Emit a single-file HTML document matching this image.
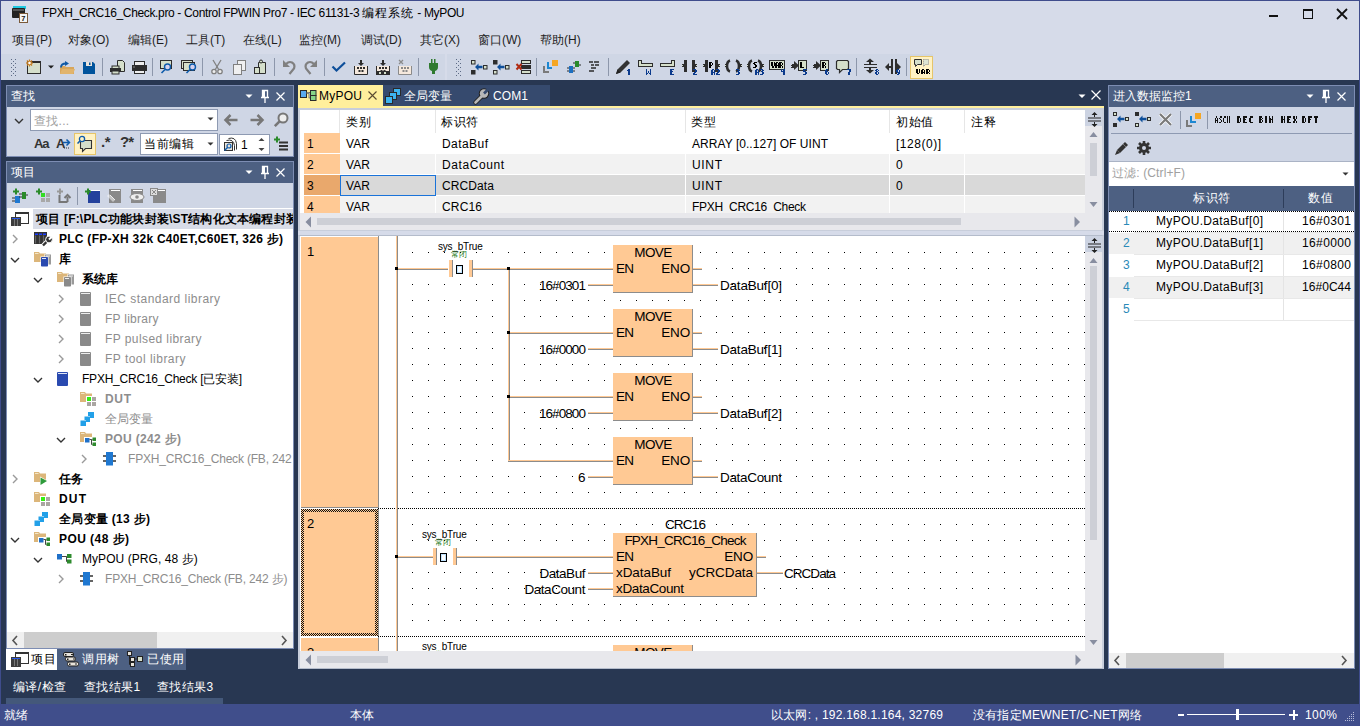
<!DOCTYPE html><html><head><meta charset="utf-8"><style>
*{box-sizing:border-box;margin:0;padding:0}
html,body{width:1360px;height:726px;overflow:hidden;background:#283752;font-family:"Liberation Sans",sans-serif;font-size:12px;color:#000}
.a{position:absolute}
.t{position:absolute;white-space:pre;line-height:14px}
svg{position:absolute;overflow:visible}
</style></head><body><div class="a" style="left:0;top:0;width:1360px;height:726px;background:#283752"></div><div class="a" style="left:0;top:0;width:1360px;height:80px;background:#d6dbe9"></div><div class="a" style="left:1px;top:54px;width:444px;height:26px;background:#cfd6e5"></div><div class="a" style="left:447px;top:54px;width:486px;height:26px;background:#cfd6e5"></div><svg style="left:11px;top:5px" width="18" height="18" viewBox="0 0 18 18"><rect x="2" y="1" width="13" height="3" fill="#1ec8e0"/><rect x="1" y="3" width="13" height="10" rx="1" fill="#222"/><rect x="2" y="4" width="11" height="2" fill="#555"/><rect x="8.5" y="8.5" width="8" height="9" fill="#f4f4f4" stroke="#7a5a3a"/><text x="10.3" y="16.3" font-size="7.5" font-weight="bold" font-family="Liberation Sans" fill="#111">7</text></svg><div class="t" style="left:42px;top:6px;font-size:12px;letter-spacing:-0.35px;color:#000">FPXH_CRC16_Check.pro - Control FPWIN Pro7 - IEC 61131-3 <span style="letter-spacing:1px">编程系统</span> - MyPOU</div><div class="a" style="left:1269px;top:15px;width:9px;height:2px;background:#111"></div><div class="a" style="left:1303px;top:9px;width:10px;height:10px;border:1px solid #111;border-top-width:2px"></div><svg style="left:1336px;top:8px" width="12" height="12" viewBox="0 0 12 12"><path d="M1 1L11 11M11 1L1 11" stroke="#111" stroke-width="1.8"/></svg><div class="t" style="left:12px;top:33px;color:#1e1e1e">项目(P)</div><div class="t" style="left:68px;top:33px;color:#1e1e1e">对象(O)</div><div class="t" style="left:128px;top:33px;color:#1e1e1e">编辑(E)</div><div class="t" style="left:186px;top:33px;color:#1e1e1e">工具(T)</div><div class="t" style="left:243px;top:33px;color:#1e1e1e">在线(L)</div><div class="t" style="left:299px;top:33px;color:#1e1e1e">监控(M)</div><div class="t" style="left:361px;top:33px;color:#1e1e1e">调试(D)</div><div class="t" style="left:420px;top:33px;color:#1e1e1e">其它(X)</div><div class="t" style="left:478px;top:33px;color:#1e1e1e">窗口(W)</div><div class="t" style="left:540px;top:33px;color:#1e1e1e">帮助(H)</div><svg class="a" style="left:0;top:54px" width="1358" height="26" viewBox="0 54 1358 26" ><rect x="11" y="59" width="1" height="1" fill="#5c6a85"/><rect x="15" y="59" width="1" height="1" fill="#5c6a85"/><rect x="11" y="63" width="1" height="1" fill="#5c6a85"/><rect x="15" y="63" width="1" height="1" fill="#5c6a85"/><rect x="11" y="67" width="1" height="1" fill="#5c6a85"/><rect x="15" y="67" width="1" height="1" fill="#5c6a85"/><rect x="11" y="71" width="1" height="1" fill="#5c6a85"/><rect x="15" y="71" width="1" height="1" fill="#5c6a85"/><rect x="11" y="75" width="1" height="1" fill="#5c6a85"/><rect x="15" y="75" width="1" height="1" fill="#5c6a85"/><rect x="13" y="61" width="1" height="1" fill="#5c6a85"/><rect x="13" y="65" width="1" height="1" fill="#5c6a85"/><rect x="13" y="69" width="1" height="1" fill="#5c6a85"/><rect x="13" y="73" width="1" height="1" fill="#5c6a85"/><rect x="456" y="59" width="1" height="1" fill="#5c6a85"/><rect x="460" y="59" width="1" height="1" fill="#5c6a85"/><rect x="456" y="63" width="1" height="1" fill="#5c6a85"/><rect x="460" y="63" width="1" height="1" fill="#5c6a85"/><rect x="456" y="67" width="1" height="1" fill="#5c6a85"/><rect x="460" y="67" width="1" height="1" fill="#5c6a85"/><rect x="456" y="71" width="1" height="1" fill="#5c6a85"/><rect x="460" y="71" width="1" height="1" fill="#5c6a85"/><rect x="456" y="75" width="1" height="1" fill="#5c6a85"/><rect x="460" y="75" width="1" height="1" fill="#5c6a85"/><rect x="458" y="61" width="1" height="1" fill="#5c6a85"/><rect x="458" y="65" width="1" height="1" fill="#5c6a85"/><rect x="458" y="69" width="1" height="1" fill="#5c6a85"/><rect x="458" y="73" width="1" height="1" fill="#5c6a85"/><rect x="102" y="58" width="1" height="18" fill="#8d97ab"/><rect x="152" y="58" width="1" height="18" fill="#8d97ab"/><rect x="202" y="58" width="1" height="18" fill="#8d97ab"/><rect x="274" y="58" width="1" height="18" fill="#8d97ab"/><rect x="324" y="58" width="1" height="18" fill="#8d97ab"/><rect x="418" y="58" width="1" height="18" fill="#8d97ab"/><rect x="536" y="58" width="1" height="18" fill="#8d97ab"/><rect x="608" y="58" width="1" height="18" fill="#8d97ab"/><rect x="856" y="58" width="1" height="18" fill="#8d97ab"/><rect x="906" y="58" width="1" height="18" fill="#8d97ab"/><rect x="27.5" y="61.5" width="13" height="12" fill="#d5dfcb" stroke="#2d2d2d"/><rect x="30" y="61" width="11" height="2" fill="#2d2d2d"/><g stroke="#c27a1e" stroke-width="1.2"><line x1="29.5" y1="59.5" x2="29.5" y2="66.5"/><line x1="26" y1="63" x2="33" y2="63"/><line x1="27" y1="60.5" x2="32" y2="65.5"/><line x1="32" y1="60.5" x2="27" y2="65.5"/></g><circle cx="29.5" cy="63" r="1.8" fill="#fff" stroke="#c27a1e"/><path d="M48 65.5h6l-3 3z" fill="#1e1e1e"/><path d="M60 66h5l1 1h8v7H60z" fill="#d8a65a"/><path d="M62 69h13l-2 5H60z" fill="#e1b46c"/><path d="M61 67.5q0-4 5-4" stroke="#0f5aa6" stroke-width="1.8" fill="none"/><path d="M65 61l4 2.5-4 2.5z" fill="#0f5aa6"/><path d="M83 62h10l2 2v10H83z" fill="#00539c"/><rect x="86" y="62" width="6" height="4" fill="#eae3dc"/><rect x="89" y="62.5" width="1.5" height="2.5" fill="#00539c"/><path d="M117.5 60.5h5l2 2v9h-7z" fill="#d5dfcb" stroke="#2d2d2d"/><rect x="112" y="66" width="7" height="3" fill="#d5dfcb" stroke="#2d2d2d" stroke-width="1"/><rect x="110" y="68" width="11" height="4" fill="#2d2d2d"/><rect x="112" y="71" width="7" height="3" fill="#d5dfcb" stroke="#2d2d2d"/><rect x="134.5" y="61.5" width="10" height="4" fill="#eee" stroke="#2d2d2d"/><rect x="132" y="65" width="15" height="6" fill="#2d2d2d"/><rect x="134.5" y="70.5" width="10" height="3" fill="#eee" stroke="#2d2d2d"/><rect x="133.5" y="66.5" width="1" height="1" fill="#ddd"/><rect x="160.5" y="60.5" width="11" height="8" fill="#d5dfcb" stroke="#2d2d2d"/><circle cx="167.5" cy="67" r="3" fill="#d6d2ee" stroke="#0e5bab" stroke-width="1.4"/><line x1="165" y1="69.5" x2="161.5" y2="73" stroke="#0e5bab" stroke-width="1.6"/><rect x="181.5" y="60.5" width="11" height="8" fill="#d5dfcb" stroke="#2d2d2d"/><rect x="183.5" y="62.5" width="11" height="8" fill="#d5dfcb" stroke="#2d2d2d"/><circle cx="192.5" cy="67" r="3" fill="#d6d2ee" stroke="#0e5bab" stroke-width="1.4"/><line x1="190" y1="69.5" x2="186.5" y2="73" stroke="#0e5bab" stroke-width="1.6"/><g stroke="#808080" stroke-width="1.3" fill="none"><line x1="213" y1="60" x2="219" y2="70"/><line x1="221" y1="60" x2="215" y2="70"/><circle cx="214" cy="71.5" r="2.2" fill="#eee"/><circle cx="220" cy="71.5" r="2.2" fill="#eee"/></g><rect x="237.5" y="60.5" width="8" height="10" fill="#f0f0f0" stroke="#808080"/><rect x="233.5" y="64.5" width="8" height="10" fill="#f0f0f0" stroke="#808080"/><path d="M258.5 62.5h7v11h-7z" fill="#d5dfcb" stroke="#2d2d2d"/><circle cx="261" cy="61.5" r="1.5" fill="#d5dfcb" stroke="#2d2d2d"/><rect x="254.5" y="67.5" width="5" height="6" fill="#d5dfcb" stroke="#2d2d2d"/><path d="M283 60l0 7 7 0z" fill="#808080"/><path d="M286 64q3-3 6-1.5q3.5 2 2 6l-4.5 5.5" stroke="#808080" stroke-width="2.2" fill="none"/><path d="M317 60l0 7-7 0z" fill="#808080"/><path d="M314 64q-3-3-6-1.5q-3.5 2-2 6l4.5 5.5" stroke="#808080" stroke-width="2.2" fill="none"/><path d="M332.5 66.5l4 4l8.5-8" stroke="#0e4f9a" stroke-width="2.2" fill="none"/><path d="M354.5 66v8.5h13V66" stroke="#2d2d2d" stroke-width="1" fill="#f5e8dc"/><rect x="357" y="67" width="2" height="2" fill="#2d2d2d"/><rect x="360" y="67" width="2" height="2" fill="#2d2d2d"/><rect x="363" y="67" width="2" height="2" fill="#2d2d2d"/><rect x="358.5" y="70" width="2" height="2" fill="#2d2d2d"/><rect x="361.5" y="70" width="2" height="2" fill="#2d2d2d"/><path d="M360 60h2v3h2l-3 3l-3-3h2z" fill="#2d2d2d"/><path d="M376.5 66v8.5h13V66" stroke="#2d2d2d" stroke-width="1" fill="#f5e8dc"/><rect x="379" y="67" width="2" height="2" fill="#2d2d2d"/><rect x="382" y="67" width="2" height="2" fill="#2d2d2d"/><rect x="385" y="67" width="2" height="2" fill="#2d2d2d"/><rect x="380.5" y="70" width="2" height="2" fill="#2d2d2d"/><rect x="383.5" y="70" width="2" height="2" fill="#2d2d2d"/><rect x="376" y="71" width="14" height="4" fill="#2d2d2d"/><rect x="379" y="72" width="2" height="2" fill="#d5dfcb"/><rect x="384" y="72" width="2" height="2" fill="#d5dfcb"/><path d="M382 60h2v3h2l-3 3l-3-3h2z" fill="#2d2d2d"/><path d="M398.5 66v8.5h13V66" stroke="#8a8a8a" stroke-width="1" fill="#f5e8dc"/><rect x="401" y="67" width="2" height="2" fill="#8a8a8a"/><rect x="404" y="67" width="2" height="2" fill="#8a8a8a"/><rect x="407" y="67" width="2" height="2" fill="#8a8a8a"/><rect x="402.5" y="70" width="2" height="2" fill="#8a8a8a"/><rect x="405.5" y="70" width="2" height="2" fill="#8a8a8a"/><path d="M399 60l4 4M403 60l-4 4" stroke="#8a8a8a" stroke-width="1.3"/><rect x="431" y="59" width="1.5" height="4" fill="#2f7a2f"/><rect x="434" y="59" width="1.5" height="4" fill="#2f7a2f"/><path d="M429 63h9v4q0 3-3 4v3h-3v-3q-3-1-3-4z" fill="#2f7a2f"/><rect x="471.5" y="60.5" width="3.5" height="3.5" fill="#d5dfcb" stroke="#2d2d2d"/><rect x="471.5" y="70.5" width="3.5" height="3.5" fill="#2d2d2d" stroke="#2d2d2d"/><rect x="483.5" y="65.5" width="3.5" height="3.5" fill="#d5dfcb" stroke="#2d2d2d"/><path d="M475 67l3.5-3.5v2.3h4v2.4h-4v2.3z" fill="#0e4f9a"/><rect x="493.5" y="60.5" width="3.5" height="3.5" fill="#2d2d2d" stroke="#2d2d2d"/><rect x="493.5" y="70.5" width="3.5" height="3.5" fill="#d5dfcb" stroke="#2d2d2d"/><rect x="505.5" y="65.5" width="3.5" height="3.5" fill="#d5dfcb" stroke="#2d2d2d"/><path d="M497 67l3.5-3.5v2.3h4v2.4h-4v2.3z" fill="#0e4f9a"/><rect x="521.5" y="60.5" width="9" height="3" fill="#d5dfcb" stroke="#2d2d2d"/><rect x="521" y="65" width="10" height="4" fill="#2d2d2d"/><rect x="521.5" y="70.5" width="9" height="3" fill="#d5dfcb" stroke="#2d2d2d"/><path d="M516.5 64l5 5.5M521.5 64l-5 5.5" stroke="#b02a12" stroke-width="2"/><rect x="552" y="60" width="6" height="6" fill="#f5a623"/><path d="M548 62v6h4" stroke="#1c87d1" stroke-width="2" fill="none"/><path d="M544 66v6h5" stroke="#7a7a7a" stroke-width="2" fill="none"/><rect x="575" y="61" width="4" height="6" fill="#2a8a2a"/><rect x="569" y="66" width="4" height="7" fill="#1c6fc0"/><path d="M567 68h2M567 71h2M573 68h2M573 71h2M573 63h2M579 65h2" stroke="#2d2d2d" stroke-width="1"/><path d="M589 62h4M594 62h5M591 65h3M595 65h4M591 68h5M589 71h5" stroke="#2d2d2d" stroke-width="1.6"/><path d="M616 74l1.5-4.5 9.5-9.5 3 3-9.5 9.5z" fill="#333"/><path d="M616 74l1.5-4.5 3 3z" fill="#222"/><path d="M628 69h2v1h-2zM627 70h3v1h-3zM628 71h2v1h-2zM628 72h2v1h-2zM628 73h2v1h-2zM628 74h2v1h-2z" fill="#0b3a8c" shape-rendering="crispEdges"/><path d="M638 60h4v3h11v4h-15z" fill="#2d2d2d" shape-rendering="crispEdges"/><path d="M639 61h2v3h11v2h-13z" fill="#d5dfcb" shape-rendering="crispEdges"/><path d="M646 69h1v1h-1zM650 69h1v1h-1zM646 70h1v1h-1zM650 70h1v1h-1zM646 71h1v1h-1zM648 71h1v1h-1zM650 71h1v1h-1zM646 72h1v1h-1zM648 72h1v1h-1zM650 72h1v1h-1zM646 73h2v1h-2zM649 73h2v1h-2zM646 74h1v1h-1zM650 74h1v1h-1z" fill="#0b3a8c" shape-rendering="crispEdges"/><path d="M660 63h11v-3h4v7h-15z" fill="#2d2d2d" shape-rendering="crispEdges"/><path d="M661 64h11v-3h2v5h-13z" fill="#d5dfcb" shape-rendering="crispEdges"/><path d="M670 69h4v1h-4zM670 70h2v1h-2zM670 71h3v1h-3zM670 72h2v1h-2zM670 73h2v1h-2zM670 74h4v1h-4z" fill="#0b3a8c" shape-rendering="crispEdges"/><rect x="684" y="60" width="3" height="12" fill="#2d2d2d" shape-rendering="crispEdges"/><rect x="692" y="60" width="3" height="12" fill="#2d2d2d" shape-rendering="crispEdges"/><rect x="682" y="64" width="2" height="3" fill="#2d2d2d" shape-rendering="crispEdges"/><rect x="695" y="64" width="2" height="3" fill="#2d2d2d" shape-rendering="crispEdges"/><rect x="682" y="65" width="1" height="1" fill="#d5dfcb" shape-rendering="crispEdges"/><rect x="696" y="65" width="1" height="1" fill="#d5dfcb" shape-rendering="crispEdges"/><path d="M693 69h3v1h-3zM695 70h2v1h-2zM695 71h2v1h-2zM694 72h2v1h-2zM693 73h2v1h-2zM693 74h4v1h-4z" fill="#0b3a8c" shape-rendering="crispEdges"/><rect x="705" y="60" width="3" height="12" fill="#2d2d2d" shape-rendering="crispEdges"/><rect x="715" y="60" width="3" height="12" fill="#2d2d2d" shape-rendering="crispEdges"/><rect x="703" y="64" width="2" height="3" fill="#2d2d2d" shape-rendering="crispEdges"/><rect x="718" y="64" width="2" height="3" fill="#2d2d2d" shape-rendering="crispEdges"/><rect x="703" y="65" width="1" height="1" fill="#d5dfcb" shape-rendering="crispEdges"/><rect x="719" y="65" width="1" height="1" fill="#d5dfcb" shape-rendering="crispEdges"/><path d="M709 62h3v1h-3zM709 63h2v1h-2zM712 63h1v1h-1zM709 64h2v1h-2zM712 64h1v1h-1zM709 65h3v1h-3zM709 66h2v1h-2zM709 67h2v1h-2z" fill="#000" shape-rendering="crispEdges"/><path d="M712 69h2v1h-2zM711 70h2v1h-2zM714 70h1v1h-1zM711 71h2v1h-2zM714 71h1v1h-1zM711 72h4v1h-4zM711 73h2v1h-2zM714 73h1v1h-1zM711 74h2v1h-2zM714 74h1v1h-1zM716 69h3v1h-3zM718 70h2v1h-2zM718 71h2v1h-2zM717 72h2v1h-2zM716 73h2v1h-2zM716 74h4v1h-4z" fill="#0b3a8c" shape-rendering="crispEdges"/><path d="M730 60.5q-3 1-3 5.5t3 5.5" stroke="#2d2d2d" stroke-width="2.6" fill="none"/><path d="M736 60.5q3 1 3 5.5t-3 5.5" stroke="#2d2d2d" stroke-width="2.6" fill="none"/><rect x="725" y="64" width="2" height="3" fill="#2d2d2d" shape-rendering="crispEdges"/><rect x="740" y="64" width="2" height="3" fill="#2d2d2d" shape-rendering="crispEdges"/><rect x="725" y="65" width="1" height="1" fill="#d5dfcb" shape-rendering="crispEdges"/><rect x="741" y="65" width="1" height="1" fill="#d5dfcb" shape-rendering="crispEdges"/><path d="M736 69h3v1h-3zM738 70h2v1h-2zM737 71h2v1h-2zM738 72h2v1h-2zM738 73h2v1h-2zM736 74h3v1h-3z" fill="#0b3a8c" shape-rendering="crispEdges"/><path d="M752 60.5q-3 1-3 5.5t3 5.5" stroke="#2d2d2d" stroke-width="2.6" fill="none"/><path d="M758 60.5q3 1 3 5.5t-3 5.5" stroke="#2d2d2d" stroke-width="2.6" fill="none"/><rect x="747" y="64" width="2" height="3" fill="#2d2d2d" shape-rendering="crispEdges"/><rect x="762" y="64" width="2" height="3" fill="#2d2d2d" shape-rendering="crispEdges"/><rect x="747" y="65" width="1" height="1" fill="#d5dfcb" shape-rendering="crispEdges"/><rect x="763" y="65" width="1" height="1" fill="#d5dfcb" shape-rendering="crispEdges"/><path d="M754 62h3v1h-3zM753 63h2v1h-2zM754 64h2v1h-2zM755 65h2v1h-2zM755 66h2v1h-2zM753 67h3v1h-3z" fill="#000" shape-rendering="crispEdges"/><path d="M756 69h2v1h-2zM755 70h2v1h-2zM758 70h1v1h-1zM755 71h2v1h-2zM758 71h1v1h-1zM755 72h4v1h-4zM755 73h2v1h-2zM758 73h1v1h-1zM755 74h2v1h-2zM758 74h1v1h-1zM760 69h3v1h-3zM762 70h2v1h-2zM761 71h2v1h-2zM762 72h2v1h-2zM762 73h2v1h-2zM760 74h3v1h-3z" fill="#0b3a8c" shape-rendering="crispEdges"/><rect x="769" y="60" width="16" height="10" fill="#2d2d2d" shape-rendering="crispEdges"/><rect x="770" y="61" width="14" height="8" fill="#d5dfcb" shape-rendering="crispEdges"/><path d="M771 62h2v1h-2zM774 62h1v1h-1zM771 63h2v1h-2zM774 63h1v1h-1zM771 64h2v1h-2zM774 64h1v1h-1zM771 65h2v1h-2zM774 65h1v1h-1zM772 66h2v1h-2zM772 67h2v1h-2zM776 62h2v1h-2zM775 63h2v1h-2zM778 63h1v1h-1zM775 64h2v1h-2zM778 64h1v1h-1zM775 65h4v1h-4zM775 66h2v1h-2zM778 66h1v1h-1zM775 67h2v1h-2zM778 67h1v1h-1zM779 62h3v1h-3zM779 63h2v1h-2zM782 63h1v1h-1zM779 64h2v1h-2zM782 64h1v1h-1zM779 65h3v1h-3zM779 66h2v1h-2zM782 66h1v1h-1zM779 67h2v1h-2zM782 67h1v1h-1z" fill="#000" shape-rendering="crispEdges"/><rect x="783" y="69" width="2" height="1" fill="#2d2d2d" shape-rendering="crispEdges"/><path d="M781 69h1v1h-1zM783 69h2v1h-2zM781 70h1v1h-1zM783 70h2v1h-2zM781 71h4v1h-4zM783 72h2v1h-2zM783 73h2v1h-2zM783 74h2v1h-2z" fill="#0b3a8c" shape-rendering="crispEdges"/><path d="M792 64h2v-3l5 4.5-5 4.5v-3h-2z" fill="#2d2d2d"/><rect x="791" y="65" width="3" height="1" fill="#2d2d2d" shape-rendering="crispEdges"/><rect x="791" y="67" width="3" height="1" fill="#2d2d2d" shape-rendering="crispEdges"/><rect x="798" y="60" width="9" height="11" fill="#2d2d2d" shape-rendering="crispEdges"/><rect x="799" y="61" width="7" height="9" fill="#d5dfcb" shape-rendering="crispEdges"/><path d="M800 62h2v1h-2zM800 63h2v1h-2zM800 64h2v1h-2zM800 65h2v1h-2zM800 66h2v1h-2zM800 67h4v1h-4z" fill="#000" shape-rendering="crispEdges"/><path d="M803 69h4v1h-4zM803 70h2v1h-2zM803 71h3v1h-3zM805 72h2v1h-2zM805 73h2v1h-2zM803 74h3v1h-3z" fill="#0b3a8c" shape-rendering="crispEdges"/><path d="M814 64h2v-3l5 4.5-5 4.5v-3h-2z" fill="#2d2d2d"/><rect x="813" y="65" width="3" height="1" fill="#2d2d2d" shape-rendering="crispEdges"/><rect x="813" y="67" width="3" height="1" fill="#2d2d2d" shape-rendering="crispEdges"/><rect x="820" y="60" width="9" height="11" fill="#2d2d2d" shape-rendering="crispEdges"/><rect x="821" y="61" width="7" height="9" fill="#d5dfcb" shape-rendering="crispEdges"/><path d="M822 62h3v1h-3zM822 63h2v1h-2zM825 63h1v1h-1zM822 64h2v1h-2zM825 64h1v1h-1zM822 65h3v1h-3zM822 66h2v1h-2zM825 66h1v1h-1zM822 67h2v1h-2zM825 67h1v1h-1z" fill="#000" shape-rendering="crispEdges"/><path d="M826 69h2v1h-2zM825 70h2v1h-2zM825 71h3v1h-3zM825 72h2v1h-2zM828 72h1v1h-1zM825 73h2v1h-2zM828 73h1v1h-1zM826 74h2v1h-2z" fill="#0b3a8c" shape-rendering="crispEdges"/><path d="M837.5 60.5h10l1 1v7l-1 1h-5l-3 3v-3h-2l-1-1v-7z" fill="#d5dfcb" stroke="#2d2d2d" stroke-width="1.2"/><path d="M847 69h4v1h-4zM849 70h2v1h-2zM849 71h2v1h-2zM848 72h2v1h-2zM848 73h2v1h-2zM848 74h2v1h-2z" fill="#0b3a8c" shape-rendering="crispEdges"/><rect x="864" y="64" width="13" height="1" fill="#2d2d2d" shape-rendering="crispEdges"/><rect x="864" y="67" width="13" height="1" fill="#2d2d2d" shape-rendering="crispEdges"/><rect x="869" y="61" width="2" height="3" fill="#2d2d2d" shape-rendering="crispEdges"/><rect x="869" y="68" width="2" height="3" fill="#2d2d2d" shape-rendering="crispEdges"/><path d="M866 62l4-3.5 4 3.5zM866 70l4 3.5 4-3.5z" fill="#2d2d2d"/><path d="M876 69h2v1h-2zM875 70h2v1h-2zM878 70h1v1h-1zM876 71h2v1h-2zM875 72h2v1h-2zM878 72h1v1h-1zM875 73h2v1h-2zM878 73h1v1h-1zM876 74h2v1h-2z" fill="#0b3a8c" shape-rendering="crispEdges"/><rect x="891" y="59" width="2" height="15" fill="#2d2d2d" shape-rendering="crispEdges"/><rect x="895" y="59" width="2" height="15" fill="#2d2d2d" shape-rendering="crispEdges"/><rect x="888" y="66" width="3" height="2" fill="#2d2d2d" shape-rendering="crispEdges"/><rect x="897" y="66" width="3" height="2" fill="#2d2d2d" shape-rendering="crispEdges"/><path d="M885 67l4-4v8zM901 67l-4-4v8z" fill="#2d2d2d"/><path d="M897 69h2v1h-2zM896 70h2v1h-2zM899 70h1v1h-1zM896 71h2v1h-2zM899 71h1v1h-1zM897 72h3v1h-3zM898 73h2v1h-2zM897 74h2v1h-2z" fill="#0b3a8c" shape-rendering="crispEdges"/><rect x="910.5" y="56.5" width="22" height="22" fill="#fff2c4" stroke="#e6c56a"/><path d="M914.5 59.5h7v5h-4l-2 2v-2h-1z" fill="#d5dfcb" stroke="#2d2d2d"/><path d="M923.5 59.5h5v5h-3l-2 2z" fill="#dde5d3" stroke="#8a8a8a" stroke-dasharray="1 1"/><path d="M916 69h2v1h-2zM919 69h1v1h-1zM916 70h2v1h-2zM919 70h1v1h-1zM916 71h2v1h-2zM919 71h1v1h-1zM916 72h2v1h-2zM919 72h1v1h-1zM917 73h2v1h-2zM922 69h2v1h-2zM921 70h2v1h-2zM924 70h1v1h-1zM921 71h2v1h-2zM924 71h1v1h-1zM921 72h4v1h-4zM921 73h2v1h-2zM924 73h1v1h-1zM926 69h3v1h-3zM926 70h2v1h-2zM929 70h1v1h-1zM926 71h2v1h-2zM929 71h1v1h-1zM926 72h3v1h-3zM926 73h2v1h-2zM929 73h1v1h-1z" fill="#000" shape-rendering="crispEdges"/></svg><div class="a" style="left:6px;top:85px;width:288px;height:22px;background:#4d6082;border:1px solid #7d8db3;border-bottom:none"></div><div class="t" style="left:11px;top:89px;color:#fff">查找</div><svg style="left:245px;top:90px" width="10" height="12" viewBox="0 0 10 12"><path d="M0.5 4.5h7l-3.5 3.5z" fill="#fff"/></svg><svg style="left:261px;top:90px" width="10" height="14" viewBox="0 0 10 14"><path d="M1.5 0.5h5v7h-5z M0 7.5h8 M4 8v5" stroke="#fff" stroke-width="1.3" fill="none"/><rect x="2" y="1" width="2" height="6" fill="#fff"/></svg><svg style="left:276px;top:92px" width="10" height="10" viewBox="0 0 10 10"><path d="M0.5 0.5l8 8M8.5 0.5l-8 8" stroke="#fff" stroke-width="1.2"/></svg><div class="a" style="left:6px;top:107px;width:288px;height:50px;background:#cfd6e5;border:1px solid #7d8db3;border-top:none"></div><svg style="left:14px;top:114px" width="12" height="12" viewBox="0 0 12 12"><path d="M1 5l4 4 4-4" stroke="#333" stroke-width="1.4" fill="none"/></svg><div class="a" style="left:30px;top:109px;width:188px;height:22px;background:#fff;border:1px solid #8e9ab2"></div><div class="t" style="left:34px;top:114px;color:#a0a0a0;letter-spacing:0.3px">查找...</div><svg style="left:207px;top:117px" width="8" height="5" viewBox="0 0 8 5"><path d="M0.5 0.5h6l-3 3z" fill="#333"/></svg><svg style="left:223px;top:113px" width="16" height="14" viewBox="0 0 16 14"><path d="M2.5 7h12M7.5 2L2.5 7l5 5" stroke="#777" stroke-width="2.5" fill="none"/></svg><svg style="left:249px;top:113px" width="16" height="14" viewBox="0 0 16 14"><path d="M1.5 7h12M8.5 2l5 5-5 5" stroke="#777" stroke-width="2.5" fill="none"/></svg><svg style="left:273px;top:112px" width="16" height="16" viewBox="0 0 16 16"><circle cx="10" cy="6" r="4.5" stroke="#777" stroke-width="2" fill="#eee"/><path d="M6.8 9.2l-5 5" stroke="#777" stroke-width="2.6"/></svg><div class="t" style="left:34px;top:137px;font-weight:bold;font-size:13px;color:#333;letter-spacing:-1.2px">Aa</div><div class="t" style="left:56px;top:137px;font-weight:bold;font-size:13px;color:#333">A</div><svg style="left:63px;top:137px" width="9" height="12" viewBox="0 0 9 12"><path d="M0 5.5h6M3.5 2.5l3 3-3 3" stroke="#0e5bab" stroke-width="1.5" fill="none"/><path d="M1 11h1M3 11h1M5 11h1" stroke="#333"/></svg><div class="a" style="left:74px;top:133px;width:22px;height:22px;background:#fff2c4;border:1px solid #e6c56a"></div><svg style="left:76px;top:135px" width="18" height="18" viewBox="0 0 18 18"><path d="M4.5 5.5h11v8h-6l-3 3v-3h-2z" fill="#d5dfcb" stroke="#333" stroke-width="1.1"/><circle cx="6" cy="4" r="2.6" fill="#fff2c4" stroke="#0e5bab" stroke-width="1.3"/><path d="M4.2 5.8l-2.7 2.7" stroke="#0e5bab" stroke-width="1.6"/></svg><div class="t" style="left:101px;top:135px;font-weight:bold;font-size:15px;color:#333;letter-spacing:-0.5px">.*</div><div class="t" style="left:120px;top:135px;font-weight:bold;font-size:15px;color:#333;letter-spacing:-1px">?*</div><div class="a" style="left:140px;top:133px;width:78px;height:22px;background:#fff;border:1px solid #8e9ab2"></div><div class="t" style="left:144px;top:137px;color:#000;letter-spacing:0.6px">当前编辑</div><svg style="left:207px;top:142px" width="8" height="5" viewBox="0 0 8 5"><path d="M0.5 0.5h6l-3 3z" fill="#333"/></svg><div class="a" style="left:219px;top:134px;width:51px;height:21px;background:#fff;border:1px solid #8e9ab2"></div><svg style="left:222px;top:136px" width="16" height="16" viewBox="0 0 16 16"><path d="M6.5 2.5q7-2 8 5v6" stroke="#333" fill="none"/><path d="M4.5 4.5q7-2 8 5v5" stroke="#333" fill="none"/><rect x="2.5" y="6.5" width="8" height="8" fill="#e8e4dc" stroke="#333"/><circle cx="7" cy="10" r="2" fill="none" stroke="#0e5bab" stroke-width="1.2"/><path d="M5.5 11.5l-3 3" stroke="#0e5bab" stroke-width="1.4"/></svg><div class="t" style="left:241px;top:138px;color:#000">1</div><svg style="left:258px;top:137px" width="8" height="16" viewBox="0 0 8 16"><path d="M0.5 4h6l-3-3z" fill="#444"/><path d="M0.5 11h6l-3 3z" fill="#444"/></svg><svg style="left:274px;top:136px" width="16" height="16" viewBox="0 0 16 16"><path d="M0 3.5h6M3 0.5v6" stroke="#2a8a2a" stroke-width="2"/><path d="M5 6.5h9M5 10h9M5 13.5h9" stroke="#333" stroke-width="2"/></svg><div class="a" style="left:6px;top:161px;width:288px;height:22px;background:#4d6082;border:1px solid #7d8db3;border-bottom:none"></div><div class="t" style="left:11px;top:165px;color:#fff">项目</div><svg style="left:245px;top:166px" width="10" height="12" viewBox="0 0 10 12"><path d="M0.5 4.5h7l-3.5 3.5z" fill="#fff"/></svg><svg style="left:261px;top:166px" width="10" height="14" viewBox="0 0 10 14"><path d="M1.5 0.5h5v7h-5z M0 7.5h8 M4 8v5" stroke="#fff" stroke-width="1.3" fill="none"/><rect x="2" y="1" width="2" height="6" fill="#fff"/></svg><svg style="left:276px;top:168px" width="10" height="10" viewBox="0 0 10 10"><path d="M0.5 0.5l8 8M8.5 0.5l-8 8" stroke="#fff" stroke-width="1.2"/></svg><div class="a" style="left:6px;top:183px;width:288px;height:25px;background:#cfd6e5;border-left:1px solid #7d8db3;border-right:1px solid #7d8db3"></div><svg style="left:12px;top:188px" width="18" height="16" viewBox="0 0 18 16"><path d="M1 3.5h6M4 0.5v6" stroke="#2a8a2a" stroke-width="2"/><rect x="3" y="8" width="5" height="7" fill="#1f78d1"/><rect x="10" y="4" width="4" height="7" fill="#2a8a2a"/><path d="M0 10h3M0 13h3M7 6h3M7 9h3M14 7h2" stroke="#333" stroke-width="1"/></svg><svg style="left:35px;top:188px" width="18" height="16" viewBox="0 0 18 16"><path d="M1 3.5h6M4 0.5v6" stroke="#2a8a2a" stroke-width="2"/><rect x="6" y="5" width="4" height="4" fill="#33dd22"/><rect x="11" y="5" width="4" height="4" fill="#a8a8a8"/><rect x="6" y="10" width="4" height="4" fill="#a8a8a8"/><rect x="11" y="10" width="4" height="4" fill="#a8a8a8"/></svg><svg style="left:56px;top:188px" width="18" height="16" viewBox="0 0 18 16"><path d="M1 3.5h6M4 0.5v6" stroke="#999" stroke-width="2"/><path d="M3.5 7v7h8" stroke="#777" stroke-width="2" fill="none"/><path d="M11.5 14V9" stroke="#777" stroke-width="2"/><path d="M8.5 10l3-3 3 3" stroke="#777" stroke-width="2" fill="none"/></svg><svg style="left:85px;top:188px" width="18" height="16" viewBox="0 0 18 16"><rect x="3" y="2" width="12" height="13" fill="#24419c"/><rect x="5" y="2" width="10" height="1" fill="#fff"/><path d="M0 3.5h6M3 0.5v6" stroke="#2a8a2a" stroke-width="2"/></svg><svg style="left:107px;top:188px" width="18" height="16" viewBox="0 0 18 16"><rect x="2" y="1" width="12" height="14" fill="#8a8a8a"/><rect x="4" y="2" width="9" height="1" fill="#fff"/><path d="M2 6l6 6-2 2-6-6z" fill="#fff" opacity=".5"/><path d="M3 7l5 5" stroke="#eee" stroke-width="1"/></svg><svg style="left:129px;top:188px" width="18" height="16" viewBox="0 0 18 16"><rect x="2" y="1" width="12" height="14" fill="#8a8a8a"/><rect x="4" y="2" width="9" height="1" fill="#fff"/><ellipse cx="8" cy="9" rx="7" ry="3.5" fill="#eee" stroke="#8a8a8a"/><circle cx="8" cy="9" r="1.8" fill="#8a8a8a"/></svg><svg style="left:150px;top:188px" width="18" height="16" viewBox="0 0 18 16"><rect x="3" y="1" width="13" height="14" fill="#8a8a8a"/><rect x="7" y="2" width="8" height="1" fill="#fff"/><rect x="0.5" y="0.5" width="7" height="7" fill="#ddd" stroke="#8a8a8a"/><path d="M2 2l4 4M6 2l-4 4" stroke="#8a8a8a" stroke-width="1"/></svg><div class="a" style="left:77px;top:187px;width:1px;height:18px;background:#8d97ab"></div><div class="a" style="left:6px;top:208px;width:288px;height:441px;background:#fff;border-left:1px solid #7d8db3;border-right:1px solid #7d8db3;overflow:hidden"><div class="a" style="left:26px;top:1px;width:261px;height:20px;background:#d8dce7"></div><svg style="left:4px;top:3px" width="18" height="16" viewBox="0 0 18 16"><rect x="4.5" y="1.5" width="13" height="11" fill="#fff" stroke="#333"/><rect x="5" y="1" width="13" height="2" fill="#333"/><rect x="0" y="6" width="10" height="9" fill="#3c3c3c"/><rect x="1" y="7" width="8" height="1" fill="#2a5ae8"/><path d="M3.5 8v7M6.5 8v7" stroke="#777" stroke-width="1"/></svg><div class="t" style="left:29px;top:4px;color:#000;font-weight:bold;letter-spacing:0.2px">项目 [F:\PLC功能块封装\ST结构化文本编程封装\</div><svg style="left:4px;top:24px" width="10" height="14" viewBox="0 0 10 14"><path d="M2 3l4 4-4 4" stroke="#9a9a9a" stroke-width="1.4" fill="none"/></svg><svg style="left:27px;top:23px" width="18" height="16" viewBox="0 0 18 16"><rect x="0" y="1" width="13" height="12" fill="#333"/><rect x="1" y="2.5" width="3" height="1.5" fill="#1a3cff"/><rect x="5" y="2.5" width="3" height="1.5" fill="#1a3cff"/><rect x="9" y="2.5" width="3" height="1.5" fill="#1a3cff"/><path d="M1.5 4.5v8M5.5 4.5v8M9.5 4.5v8" stroke="#666" stroke-width="1.2"/><path d="M9 14.5l5-5" stroke="#fff" stroke-width="4.2"/><path d="M9 14.5l5-5" stroke="#333" stroke-width="2.4"/><circle cx="15" cy="8.5" r="3.4" fill="#333" stroke="#fff" stroke-width="1"/><path d="M15 8.5l3-3" stroke="#fff" stroke-width="2"/></svg><div class="t" style="left:52px;top:24px;color:#000;font-weight:bold;letter-spacing:0.26px">PLC (FP-XH 32k C40ET,C60ET, 326 步)</div><svg style="left:3px;top:45px" width="12" height="12" viewBox="0 0 12 12"><path d="M1 5l4 4 4-4" stroke="#333" stroke-width="1.4" fill="none"/></svg><svg style="left:27px;top:43px" width="18" height="16" viewBox="0 0 18 16"><path d="M0 1h5l1 1.5h6V11H0z" fill="#dcb67a"/><path d="M1 2.5h3.5" stroke="#f4e6c8" stroke-width="1"/><rect x="10.5" y="3" width="7" height="10.5" fill="#fff"/><rect x="11" y="3.5" width="6" height="10" fill="#9a9a9a"/><rect x="12" y="4.5" width="4" height="1" fill="#e8e8e8"/><rect x="6.5" y="5.5" width="8" height="10" fill="#fff"/><rect x="7" y="6" width="7" height="9.5" rx="0.8" fill="#2a4ab0"/><rect x="8" y="7" width="4" height="1" fill="#fff" opacity=".85"/></svg><div class="t" style="left:52px;top:44px;color:#000;font-weight:bold;letter-spacing:0.2px">库</div><svg style="left:26px;top:65px" width="12" height="12" viewBox="0 0 12 12"><path d="M1 5l4 4 4-4" stroke="#333" stroke-width="1.4" fill="none"/></svg><svg style="left:50px;top:63px" width="18" height="16" viewBox="0 0 18 16"><path d="M0 1h5l1 1.5h6V11H0z" fill="#dcb67a"/><path d="M1 2.5h3.5" stroke="#f4e6c8" stroke-width="1"/><rect x="10.5" y="3" width="7" height="10.5" fill="#fff"/><rect x="11" y="3.5" width="6" height="10" fill="#9a9a9a"/><rect x="12" y="4.5" width="4" height="1" fill="#e8e8e8"/><rect x="6.5" y="5.5" width="8" height="10" fill="#fff"/><rect x="7" y="6" width="7" height="9.5" rx="0.8" fill="#8a8a8a"/><rect x="8" y="7" width="4" height="1" fill="#fff" opacity=".85"/></svg><div class="t" style="left:75px;top:64px;color:#000;font-weight:bold;letter-spacing:0.0px">系统库</div><svg style="left:50px;top:84px" width="10" height="14" viewBox="0 0 10 14"><path d="M2 3l4 4-4 4" stroke="#9a9a9a" stroke-width="1.4" fill="none"/></svg><svg style="left:71px;top:83px" width="18" height="16" viewBox="0 0 18 16"><rect x="2" y="1" width="11" height="14" rx="1" fill="#8a8a8a"/><rect x="3" y="2" width="9" height="1" fill="#fff" opacity=".85"/></svg><div class="t" style="left:98px;top:84px;color:#8d8d8d;font-weight:normal;letter-spacing:0.471px">IEC standard library</div><svg style="left:50px;top:104px" width="10" height="14" viewBox="0 0 10 14"><path d="M2 3l4 4-4 4" stroke="#9a9a9a" stroke-width="1.4" fill="none"/></svg><svg style="left:71px;top:103px" width="18" height="16" viewBox="0 0 18 16"><rect x="2" y="1" width="11" height="14" rx="1" fill="#8a8a8a"/><rect x="3" y="2" width="9" height="1" fill="#fff" opacity=".85"/></svg><div class="t" style="left:98px;top:104px;color:#8d8d8d;font-weight:normal;letter-spacing:0.264px">FP library</div><svg style="left:50px;top:124px" width="10" height="14" viewBox="0 0 10 14"><path d="M2 3l4 4-4 4" stroke="#9a9a9a" stroke-width="1.4" fill="none"/></svg><svg style="left:71px;top:123px" width="18" height="16" viewBox="0 0 18 16"><rect x="2" y="1" width="11" height="14" rx="1" fill="#8a8a8a"/><rect x="3" y="2" width="9" height="1" fill="#fff" opacity=".85"/></svg><div class="t" style="left:98px;top:124px;color:#8d8d8d;font-weight:normal;letter-spacing:0.417px">FP pulsed library</div><svg style="left:50px;top:144px" width="10" height="14" viewBox="0 0 10 14"><path d="M2 3l4 4-4 4" stroke="#9a9a9a" stroke-width="1.4" fill="none"/></svg><svg style="left:71px;top:143px" width="18" height="16" viewBox="0 0 18 16"><rect x="2" y="1" width="11" height="14" rx="1" fill="#8a8a8a"/><rect x="3" y="2" width="9" height="1" fill="#fff" opacity=".85"/></svg><div class="t" style="left:98px;top:144px;color:#8d8d8d;font-weight:normal;letter-spacing:0.478px">FP tool library</div><svg style="left:26px;top:165px" width="12" height="12" viewBox="0 0 12 12"><path d="M1 5l4 4 4-4" stroke="#333" stroke-width="1.4" fill="none"/></svg><svg style="left:48px;top:163px" width="18" height="16" viewBox="0 0 18 16"><rect x="2" y="1" width="11" height="14" rx="1" fill="#2a4ab0"/><rect x="3" y="2" width="9" height="1" fill="#fff" opacity=".85"/></svg><div class="t" style="left:75px;top:164px;color:#000;font-weight:normal;letter-spacing:-0.225px">FPXH_CRC16_Check [已安装]</div><svg style="left:73px;top:183px" width="18" height="16" viewBox="0 0 18 16"><path d="M0 1h5l1 1.5h6V11H0z" fill="#dcb67a"/><path d="M1 2.5h3.5" stroke="#f4e6c8" stroke-width="1"/><rect x="6" y="5" width="11" height="11" fill="#fff"/><rect x="7" y="6" width="4" height="4" fill="#33ee11"/><rect x="12" y="6" width="4" height="4" fill="#aaa6a2"/><rect x="7" y="11" width="4" height="4" fill="#aaa6a2"/><rect x="12" y="11" width="4" height="4" fill="#aaa6a2"/></svg><div class="t" style="left:98px;top:184px;color:#8d8d8d;font-weight:bold;letter-spacing:0.664px">DUT</div><svg style="left:73px;top:203px" width="18" height="16" viewBox="0 0 18 16"><rect x="8" y="1" width="6" height="6" fill="#22a0e8"/><rect x="4" y="5" width="6" height="6" fill="#fff"/><rect x="4.5" y="5.5" width="5.5" height="5.5" fill="#22a0e8"/><rect x="0" y="9" width="6" height="6" fill="#fff"/><rect x="0.5" y="9.5" width="5.5" height="5.5" fill="#22a0e8"/></svg><div class="t" style="left:98px;top:204px;color:#8d8d8d;font-weight:normal;letter-spacing:0.0px">全局变量</div><svg style="left:49px;top:225px" width="12" height="12" viewBox="0 0 12 12"><path d="M1 5l4 4 4-4" stroke="#333" stroke-width="1.4" fill="none"/></svg><svg style="left:73px;top:223px" width="18" height="16" viewBox="0 0 18 16"><path d="M0 1h5l1 1.5h6V11H0z" fill="#dcb67a"/><path d="M1 2.5h3.5" stroke="#f4e6c8" stroke-width="1"/><rect x="4" y="6" width="13" height="10" fill="#fff"/><rect x="5" y="7" width="4.5" height="4.5" fill="#1f70c8"/><path d="M9.5 8.5h2v5h1M11.5 8.5h1" stroke="#444" stroke-width="1" fill="none"/><rect x="12.5" y="6.5" width="3.5" height="3.5" fill="#2e8b2e"/><rect x="12.5" y="11.5" width="3.5" height="3.5" fill="#2e8b2e"/></svg><div class="t" style="left:98px;top:224px;color:#8d8d8d;font-weight:bold;letter-spacing:0.331px">POU (242 步)</div><svg style="left:73px;top:244px" width="10" height="14" viewBox="0 0 10 14"><path d="M2 3l4 4-4 4" stroke="#9a9a9a" stroke-width="1.4" fill="none"/></svg><svg style="left:96px;top:243px" width="18" height="16" viewBox="0 0 18 16"><rect x="3" y="1" width="7" height="13.5" fill="#1f78d1"/><path d="M0 5h3M0 10h3M10 5h3M10 10h3" stroke="#333" stroke-width="1.4"/></svg><div class="t" style="left:121px;top:244px;color:#8d8d8d;font-weight:normal;letter-spacing:-0.185px">FPXH_CRC16_Check (FB, 242 步)</div><svg style="left:4px;top:264px" width="10" height="14" viewBox="0 0 10 14"><path d="M2 3l4 4-4 4" stroke="#9a9a9a" stroke-width="1.4" fill="none"/></svg><svg style="left:27px;top:263px" width="18" height="16" viewBox="0 0 18 16"><path d="M0 1h5l1 1.5h6V11H0z" fill="#dcb67a"/><path d="M1 2.5h3.5" stroke="#f4e6c8" stroke-width="1"/><path d="M6 5.5l8 4.5-8 5z" fill="#fff"/><path d="M6.5 6.5l6.5 3.5-6.5 4z" fill="#2e9b3a"/></svg><div class="t" style="left:52px;top:264px;color:#000;font-weight:bold;letter-spacing:0.0px">任务</div><svg style="left:27px;top:283px" width="18" height="16" viewBox="0 0 18 16"><path d="M0 1h5l1 1.5h6V11H0z" fill="#dcb67a"/><path d="M1 2.5h3.5" stroke="#f4e6c8" stroke-width="1"/><rect x="6" y="5" width="11" height="11" fill="#fff"/><rect x="7" y="6" width="4" height="4" fill="#33ee11"/><rect x="12" y="6" width="4" height="4" fill="#aaa6a2"/><rect x="7" y="11" width="4" height="4" fill="#aaa6a2"/><rect x="12" y="11" width="4" height="4" fill="#aaa6a2"/></svg><div class="t" style="left:52px;top:284px;color:#000;font-weight:bold;letter-spacing:1.164px">DUT</div><svg style="left:27px;top:303px" width="18" height="16" viewBox="0 0 18 16"><rect x="8" y="1" width="6" height="6" fill="#22a0e8"/><rect x="4" y="5" width="6" height="6" fill="#fff"/><rect x="4.5" y="5.5" width="5.5" height="5.5" fill="#22a0e8"/><rect x="0" y="9" width="6" height="6" fill="#fff"/><rect x="0.5" y="9.5" width="5.5" height="5.5" fill="#22a0e8"/></svg><div class="t" style="left:52px;top:304px;color:#000;font-weight:bold;letter-spacing:0.298px">全局变量 (13 步)</div><svg style="left:3px;top:325px" width="12" height="12" viewBox="0 0 12 12"><path d="M1 5l4 4 4-4" stroke="#333" stroke-width="1.4" fill="none"/></svg><svg style="left:27px;top:323px" width="18" height="16" viewBox="0 0 18 16"><path d="M0 1h5l1 1.5h6V11H0z" fill="#dcb67a"/><path d="M1 2.5h3.5" stroke="#f4e6c8" stroke-width="1"/><rect x="4" y="6" width="13" height="10" fill="#fff"/><rect x="5" y="7" width="4.5" height="4.5" fill="#1f70c8"/><path d="M9.5 8.5h2v5h1M11.5 8.5h1" stroke="#444" stroke-width="1" fill="none"/><rect x="12.5" y="6.5" width="3.5" height="3.5" fill="#2e8b2e"/><rect x="12.5" y="11.5" width="3.5" height="3.5" fill="#2e8b2e"/></svg><div class="t" style="left:52px;top:324px;color:#000;font-weight:bold;letter-spacing:0.443px">POU (48 步)</div><svg style="left:26px;top:345px" width="12" height="12" viewBox="0 0 12 12"><path d="M1 5l4 4 4-4" stroke="#333" stroke-width="1.4" fill="none"/></svg><svg style="left:50px;top:343px" width="18" height="16" viewBox="0 0 18 16"><rect x="0" y="3" width="5" height="5.5" fill="#1f70c8"/><path d="M5 5.5h4.5v5h1M9.5 5.5h1" stroke="#444" stroke-width="1" fill="none"/><rect x="10" y="3" width="4.5" height="4" fill="#2e8b2e"/><rect x="10" y="8.5" width="4.5" height="4" fill="#2e8b2e"/></svg><div class="t" style="left:75px;top:344px;color:#000;font-weight:normal;letter-spacing:0.063px">MyPOU (PRG, 48 步)</div><svg style="left:50px;top:364px" width="10" height="14" viewBox="0 0 10 14"><path d="M2 3l4 4-4 4" stroke="#9a9a9a" stroke-width="1.4" fill="none"/></svg><svg style="left:73px;top:363px" width="18" height="16" viewBox="0 0 18 16"><rect x="3" y="1" width="7" height="13.5" fill="#1f78d1"/><path d="M0 5h3M0 10h3M10 5h3M10 10h3" stroke="#333" stroke-width="1.4"/></svg><div class="t" style="left:98px;top:364px;color:#8d8d8d;font-weight:normal;letter-spacing:-0.185px">FPXH_CRC16_Check (FB, 242 步)</div></div><div class="a" style="left:7px;top:632px;width:286px;height:17px;background:#f0f0f0"></div><div class="a" style="left:24px;top:632px;width:133px;height:17px;background:#cdcdcd"></div><svg style="left:11px;top:635px" width="10" height="12" viewBox="0 0 10 12"><path d="M6 1L2 5.5 6 10" stroke="#555" stroke-width="1.6" fill="none"/></svg><svg style="left:280px;top:635px" width="10" height="12" viewBox="0 0 10 12"><path d="M2 1l4 4.5L2 10" stroke="#555" stroke-width="1.6" fill="none"/></svg><div class="a" style="left:6px;top:648px;width:288px;height:1px;background:#7d8db3"></div><div class="a" style="left:6px;top:649px;width:51px;height:21px;background:#fff"></div><svg style="left:11px;top:651px" width="18" height="17" viewBox="0 0 18 17"><rect x="4.5" y="1.5" width="13" height="11" fill="#fff" stroke="#333"/><rect x="5" y="1" width="13" height="2" fill="#333"/><rect x="0" y="6" width="10" height="10" fill="#3c3c3c"/><rect x="1" y="7" width="8" height="1" fill="#2a5ae8"/><path d="M3.5 8v7M6.5 8v7" stroke="#777" stroke-width="1"/></svg><div class="t" style="left:31px;top:652px;color:#000;letter-spacing:0.5px">项目</div><div class="a" style="left:57px;top:649px;width:129px;height:21px;background:#4d6082"></div><svg style="left:63px;top:652px" width="17" height="16" viewBox="0 0 17 16"><rect x="0.5" y="0.5" width="10" height="4" rx="1.5" fill="#e8e4dc" stroke="#222"/><rect x="2.5" y="5" width="10" height="4" rx="1.5" fill="#e8e4dc" stroke="#222"/><rect x="4.5" y="10" width="11" height="4" rx="1.5" fill="#e8e4dc" stroke="#222"/><rect x="2" y="2" width="1.5" height="1.5" fill="#222"/><rect x="4" y="6.5" width="1.5" height="1.5" fill="#222"/><rect x="6" y="11.5" width="1.5" height="1.5" fill="#222"/><path d="M8 2.5h2M10 7h2M12 12h2" stroke="#222"/></svg><div class="t" style="left:82px;top:652px;color:#fff;letter-spacing:0.5px">调用树</div><svg style="left:127px;top:651px" width="17" height="17" viewBox="0 0 17 17"><rect x="0.5" y="0.5" width="4" height="4" fill="#e8e4dc" stroke="#222"/><rect x="3.5" y="6.5" width="4" height="4" fill="#e8e4dc" stroke="#222"/><rect x="3.5" y="11.5" width="4" height="4" fill="#e8e4dc" stroke="#222"/><rect x="10.5" y="5.5" width="5" height="5" fill="#d5dfcb" stroke="#222"/><path d="M2.5 4.5v4h1M2.5 8.5v5h1M7.5 8h3" stroke="#222" fill="none"/></svg><div class="t" style="left:147px;top:652px;color:#fff;letter-spacing:0.5px">已使用</div><div class="a" style="left:298px;top:85px;width:85px;height:23px;background:#ffef9c"></div><svg style="left:300px;top:90px" width="17" height="14" viewBox="0 0 17 14"><rect x="0.5" y="0.5" width="6" height="7" fill="#5aaaf0" stroke="#2a2a2a"/><path d="M6.5 3h3v4.5h1" stroke="#2a2a2a" stroke-width="1.6" fill="none"/><path d="M6.5 3h3v4.5h1" stroke="#c8c8c8" stroke-width="0.8" fill="none"/><rect x="10.5" y="0.5" width="5.5" height="5" fill="#86d488" stroke="#2a2a2a"/><rect x="10.5" y="5.5" width="5.5" height="5" fill="#86d488" stroke="#2a2a2a"/></svg><div class="t" style="left:319px;top:89px;font-size:12px;color:#000;letter-spacing:0.25px;">MyPOU</div><svg style="left:368px;top:91px" width="10" height="10" viewBox="0 0 10 10"><path d="M0.5 0.5l8 8M8.5 0.5l-8 8" stroke="#5a4a30" stroke-width="1.1"/></svg><div class="a" style="left:383px;top:85px;width:167px;height:21px;background:#364a6e"></div><svg style="left:385px;top:88px" width="17" height="17" viewBox="0 0 17 17"><rect x="8.5" y="0.5" width="7" height="7" fill="#3db4f0" stroke="#2a2a2a"/><rect x="4.5" y="4.5" width="7" height="7" fill="#3db4f0" stroke="#2a2a2a"/><rect x="0.5" y="8.5" width="7" height="7" fill="#3db4f0" stroke="#2a2a2a"/></svg><div class="t" style="left:404px;top:89px;font-size:12px;color:#fff;letter-spacing:0.0px;">全局变量</div><svg style="left:473px;top:88px" width="17" height="17" viewBox="0 0 17 17"><path d="M2.5 14.5l6-6" stroke="#222" stroke-width="4.4" stroke-linecap="round"/><circle cx="11" cy="5.5" r="5.2" fill="#222"/><path d="M2.5 14.5l6-6" stroke="#b8b8b8" stroke-width="2.6" stroke-linecap="round"/><circle cx="11" cy="5.5" r="4.2" fill="#b8b8b8"/><path d="M11 5.5l4.5-4.5" stroke="#364a6e" stroke-width="2.6"/></svg><div class="t" style="left:493px;top:89px;font-size:12px;color:#fff;letter-spacing:0.109px;">COM1</div><svg style="left:1078px;top:91px" width="9" height="10" viewBox="0 0 9 10"><path d="M0.5 3.5h7l-3.5 3.5z" fill="#fff"/></svg><svg style="left:1091px;top:90px" width="11" height="11" viewBox="0 0 11 11"><path d="M0.5 0.5l9 9M9.5 0.5l-9 9" stroke="#fff" stroke-width="1.2"/></svg><div class="a" style="left:298px;top:106px;width:806px;height:2px;background:#ffef9c"></div><div class="a" style="left:298px;top:108px;width:806px;height:123px;background:#fff;border:2px solid #c8cedb;border-bottom-width:1px"></div><div class="a" style="left:339px;top:110px;width:1px;height:23px;background:#e6e6e6"></div><div class="a" style="left:435px;top:110px;width:1px;height:23px;background:#e6e6e6"></div><div class="a" style="left:685px;top:110px;width:1px;height:23px;background:#e6e6e6"></div><div class="a" style="left:889px;top:110px;width:1px;height:23px;background:#e6e6e6"></div><div class="a" style="left:964px;top:110px;width:1px;height:23px;background:#e6e6e6"></div><div class="t" style="left:346px;top:115px;font-size:12px;color:#000;letter-spacing:1.0px;">类别</div><div class="t" style="left:441px;top:115px;font-size:12px;color:#000;letter-spacing:0.5px;">标识符</div><div class="t" style="left:691px;top:115px;font-size:12px;color:#000;letter-spacing:1.0px;">类型</div><div class="t" style="left:896px;top:115px;font-size:12px;color:#000;letter-spacing:0.5px;">初始值</div><div class="t" style="left:971px;top:115px;font-size:12px;color:#000;letter-spacing:1.0px;">注释</div><div class="a" style="left:340px;top:133px;width:745px;height:20px;background:#fff"></div><div class="a" style="left:304px;top:133px;width:36px;height:20px;background:#ffc994"></div><div class="a" style="left:435px;top:133px;width:1px;height:20px;background:#fff"></div><div class="a" style="left:685px;top:133px;width:1px;height:20px;background:#fff"></div><div class="a" style="left:889px;top:133px;width:1px;height:20px;background:#fff"></div><div class="a" style="left:964px;top:133px;width:1px;height:20px;background:#fff"></div><div class="a" style="left:300px;top:153px;width:785px;height:1px;background:#fff"></div><div class="t" style="left:307px;top:137px;font-size:12px;color:#000;letter-spacing:0px;">1</div><div class="t" style="left:346px;top:137px;font-size:12px;color:#000;letter-spacing:0.102px;">VAR</div><div class="t" style="left:442px;top:137px;font-size:12px;color:#000;letter-spacing:0.44px;">DataBuf</div><div class="t" style="left:692px;top:137px;font-size:12px;color:#000;letter-spacing:0.051px;">ARRAY [0..127] OF UINT</div><div class="t" style="left:896px;top:137px;font-size:12px;color:#000;letter-spacing:0.52px;">[128(0)]</div><div class="a" style="left:340px;top:154px;width:745px;height:20px;background:#f2f2f2"></div><div class="a" style="left:304px;top:154px;width:36px;height:20px;background:#ffc994"></div><div class="a" style="left:435px;top:154px;width:1px;height:20px;background:#fff"></div><div class="a" style="left:685px;top:154px;width:1px;height:20px;background:#fff"></div><div class="a" style="left:889px;top:154px;width:1px;height:20px;background:#fff"></div><div class="a" style="left:964px;top:154px;width:1px;height:20px;background:#fff"></div><div class="a" style="left:300px;top:174px;width:785px;height:1px;background:#fff"></div><div class="t" style="left:307px;top:158px;font-size:12px;color:#000;letter-spacing:0px;">2</div><div class="t" style="left:346px;top:158px;font-size:12px;color:#000;letter-spacing:0.102px;">VAR</div><div class="t" style="left:442px;top:158px;font-size:12px;color:#000;letter-spacing:0.578px;">DataCount</div><div class="t" style="left:692px;top:158px;font-size:12px;color:#000;letter-spacing:0.667px;">UINT</div><div class="t" style="left:896px;top:158px;font-size:12px;color:#000;letter-spacing:0.312px;">0</div><div class="a" style="left:340px;top:175px;width:745px;height:20px;background:#d9d9d9"></div><div class="a" style="left:304px;top:175px;width:36px;height:20px;background:#e9a86c"></div><div class="a" style="left:435px;top:175px;width:1px;height:20px;background:#fff"></div><div class="a" style="left:685px;top:175px;width:1px;height:20px;background:#fff"></div><div class="a" style="left:889px;top:175px;width:1px;height:20px;background:#fff"></div><div class="a" style="left:964px;top:175px;width:1px;height:20px;background:#fff"></div><div class="a" style="left:300px;top:195px;width:785px;height:1px;background:#fff"></div><div class="t" style="left:307px;top:179px;font-size:12px;color:#000;letter-spacing:0px;">3</div><div class="t" style="left:346px;top:179px;font-size:12px;color:#000;letter-spacing:0.102px;">VAR</div><div class="t" style="left:442px;top:179px;font-size:12px;color:#000;letter-spacing:0.107px;">CRCData</div><div class="t" style="left:692px;top:179px;font-size:12px;color:#000;letter-spacing:0.667px;">UINT</div><div class="t" style="left:896px;top:179px;font-size:12px;color:#000;letter-spacing:0.312px;">0</div><div class="a" style="left:340px;top:196px;width:745px;height:17px;background:#f2f2f2"></div><div class="a" style="left:304px;top:196px;width:36px;height:17px;background:#ffc994"></div><div class="a" style="left:435px;top:196px;width:1px;height:17px;background:#fff"></div><div class="a" style="left:685px;top:196px;width:1px;height:17px;background:#fff"></div><div class="a" style="left:889px;top:196px;width:1px;height:17px;background:#fff"></div><div class="a" style="left:964px;top:196px;width:1px;height:17px;background:#fff"></div><div class="a" style="left:300px;top:216px;width:785px;height:1px;background:#fff"></div><div class="t" style="left:307px;top:200px;font-size:12px;color:#000;letter-spacing:0px;">4</div><div class="t" style="left:346px;top:200px;font-size:12px;color:#000;letter-spacing:0.102px;">VAR</div><div class="t" style="left:442px;top:200px;font-size:12px;color:#000;letter-spacing:0.16px;">CRC16</div><div class="t" style="left:692px;top:200px;font-size:12px;color:#000;letter-spacing:-0.315px;">FPXH_CRC16_Check</div><div class="a" style="left:340px;top:175px;width:96px;height:21px;border:1px solid #1a73d9"></div><div class="a" style="left:300px;top:213px;width:785px;height:17px;background:#e8e8ec"></div><div class="a" style="left:317px;top:218px;width:644px;height:7px;background:#cdcfd6"></div><svg style="left:305px;top:216px" width="7" height="12" viewBox="0 0 7 12"><path d="M6 0.5v11L0.5 6z" fill="#888ea0"/></svg><svg style="left:1074px;top:216px" width="7" height="12" viewBox="0 0 7 12"><path d="M0.5 0.5v11L6 6z" fill="#888ea0"/></svg><div class="a" style="left:1085px;top:110px;width:17px;height:120px;background:#e8e8ec"></div><div class="a" style="left:1085px;top:110px;width:17px;height:16px;background:#ccd3e2"></div><svg style="left:1087px;top:111px" width="16" height="16" viewBox="0 0 16 16"><path d="M1 7h13M1 10h13" stroke="#222" stroke-width="1.2"/><path d="M7.5 1l-3 3h6zM7.5 16l-3-3h6z" fill="#222"/><path d="M7.5 3v3M7.5 11v3" stroke="#222"/></svg><svg style="left:1089px;top:131px" width="9" height="7" viewBox="0 0 9 7"><path d="M0.5 6h8L4.5 1z" fill="#888ea0"/></svg><div class="a" style="left:1090px;top:143px;width:7px;height:33px;background:#cdcfd6"></div><svg style="left:1089px;top:201px" width="9" height="7" viewBox="0 0 9 7"><path d="M0.5 1h8L4.5 6z" fill="#888ea0"/></svg><div class="a" style="left:298px;top:231px;width:806px;height:4px;background:#d6dbe9"></div><div class="a" style="left:298px;top:235px;width:806px;height:434px;background:#fff;border:2px solid #c8cedb;border-top:1px solid #b4bccb;border-bottom:1px solid #b4bccb"></div><div class="a" style="left:300px;top:236px;width:785px;height:415px;overflow:hidden"><div class="a" style="left:1px;top:1px;width:77px;height:270px;background:#ffc994;"></div><svg style="left:112px;top:1px" width="673" height="270" shape-rendering="crispEdges"><defs><pattern id="p237" x="0" y="15" width="16" height="16" patternUnits="userSpaceOnUse"><rect width="1" height="1" fill="#000"/></pattern></defs><rect width="100%" height="100%" fill="url(#p237)"/></svg><div class="a" style="left:1px;top:273px;width:77px;height:127px;background:#ffc994;"></div><svg style="left:112px;top:273px" width="673" height="127" shape-rendering="crispEdges"><defs><pattern id="p509" x="0" y="15" width="16" height="16" patternUnits="userSpaceOnUse"><rect width="1" height="1" fill="#000"/></pattern></defs><rect width="100%" height="100%" fill="url(#p509)"/></svg><div class="a" style="left:1px;top:402px;width:77px;height:20px;background:#ffc994;"></div><svg style="left:112px;top:402px" width="673" height="13" shape-rendering="crispEdges"><defs><pattern id="p638" x="0" y="14" width="16" height="16" patternUnits="userSpaceOnUse"><rect width="1" height="1" fill="#000"/></pattern></defs><rect width="100%" height="100%" fill="url(#p638)"/></svg><div class="a" style="left:78px;top:0px;width:1px;height:415px;background:#8c8c8c;"></div><svg style="left:1px;top:273px" width="77" height="127" shape-rendering="crispEdges"><path d="M0 0h1v1h-1zM2 0h1v1h-1zM4 0h1v1h-1zM6 0h1v1h-1zM8 0h1v1h-1zM10 0h1v1h-1zM12 0h1v1h-1zM14 0h1v1h-1zM16 0h1v1h-1zM18 0h1v1h-1zM20 0h1v1h-1zM22 0h1v1h-1zM24 0h1v1h-1zM26 0h1v1h-1zM28 0h1v1h-1zM30 0h1v1h-1zM32 0h1v1h-1zM34 0h1v1h-1zM36 0h1v1h-1zM38 0h1v1h-1zM40 0h1v1h-1zM42 0h1v1h-1zM44 0h1v1h-1zM46 0h1v1h-1zM48 0h1v1h-1zM50 0h1v1h-1zM52 0h1v1h-1zM54 0h1v1h-1zM56 0h1v1h-1zM58 0h1v1h-1zM60 0h1v1h-1zM62 0h1v1h-1zM64 0h1v1h-1zM66 0h1v1h-1zM68 0h1v1h-1zM70 0h1v1h-1zM72 0h1v1h-1zM74 0h1v1h-1zM76 0h1v1h-1zM1 1h1v1h-1zM3 1h1v1h-1zM5 1h1v1h-1zM7 1h1v1h-1zM9 1h1v1h-1zM11 1h1v1h-1zM13 1h1v1h-1zM15 1h1v1h-1zM17 1h1v1h-1zM19 1h1v1h-1zM21 1h1v1h-1zM23 1h1v1h-1zM25 1h1v1h-1zM27 1h1v1h-1zM29 1h1v1h-1zM31 1h1v1h-1zM33 1h1v1h-1zM35 1h1v1h-1zM37 1h1v1h-1zM39 1h1v1h-1zM41 1h1v1h-1zM43 1h1v1h-1zM45 1h1v1h-1zM47 1h1v1h-1zM49 1h1v1h-1zM51 1h1v1h-1zM53 1h1v1h-1zM55 1h1v1h-1zM57 1h1v1h-1zM59 1h1v1h-1zM61 1h1v1h-1zM63 1h1v1h-1zM65 1h1v1h-1zM67 1h1v1h-1zM69 1h1v1h-1zM71 1h1v1h-1zM73 1h1v1h-1zM75 1h1v1h-1zM0 2h1v1h-1zM2 2h1v1h-1zM4 2h1v1h-1zM6 2h1v1h-1zM8 2h1v1h-1zM10 2h1v1h-1zM12 2h1v1h-1zM14 2h1v1h-1zM16 2h1v1h-1zM18 2h1v1h-1zM20 2h1v1h-1zM22 2h1v1h-1zM24 2h1v1h-1zM26 2h1v1h-1zM28 2h1v1h-1zM30 2h1v1h-1zM32 2h1v1h-1zM34 2h1v1h-1zM36 2h1v1h-1zM38 2h1v1h-1zM40 2h1v1h-1zM42 2h1v1h-1zM44 2h1v1h-1zM46 2h1v1h-1zM48 2h1v1h-1zM50 2h1v1h-1zM52 2h1v1h-1zM54 2h1v1h-1zM56 2h1v1h-1zM58 2h1v1h-1zM60 2h1v1h-1zM62 2h1v1h-1zM64 2h1v1h-1zM66 2h1v1h-1zM68 2h1v1h-1zM70 2h1v1h-1zM72 2h1v1h-1zM74 2h1v1h-1zM76 2h1v1h-1zM1 3h1v1h-1zM75 3h1v1h-1zM0 4h1v1h-1zM2 4h1v1h-1zM74 4h1v1h-1zM76 4h1v1h-1zM1 5h1v1h-1zM75 5h1v1h-1zM0 6h1v1h-1zM2 6h1v1h-1zM74 6h1v1h-1zM76 6h1v1h-1zM1 7h1v1h-1zM75 7h1v1h-1zM0 8h1v1h-1zM2 8h1v1h-1zM74 8h1v1h-1zM76 8h1v1h-1zM1 9h1v1h-1zM75 9h1v1h-1zM0 10h1v1h-1zM2 10h1v1h-1zM74 10h1v1h-1zM76 10h1v1h-1zM1 11h1v1h-1zM75 11h1v1h-1zM0 12h1v1h-1zM2 12h1v1h-1zM74 12h1v1h-1zM76 12h1v1h-1zM1 13h1v1h-1zM75 13h1v1h-1zM0 14h1v1h-1zM2 14h1v1h-1zM74 14h1v1h-1zM76 14h1v1h-1zM1 15h1v1h-1zM75 15h1v1h-1zM0 16h1v1h-1zM2 16h1v1h-1zM74 16h1v1h-1zM76 16h1v1h-1zM1 17h1v1h-1zM75 17h1v1h-1zM0 18h1v1h-1zM2 18h1v1h-1zM74 18h1v1h-1zM76 18h1v1h-1zM1 19h1v1h-1zM75 19h1v1h-1zM0 20h1v1h-1zM2 20h1v1h-1zM74 20h1v1h-1zM76 20h1v1h-1zM1 21h1v1h-1zM75 21h1v1h-1zM0 22h1v1h-1zM2 22h1v1h-1zM74 22h1v1h-1zM76 22h1v1h-1zM1 23h1v1h-1zM75 23h1v1h-1zM0 24h1v1h-1zM2 24h1v1h-1zM74 24h1v1h-1zM76 24h1v1h-1zM1 25h1v1h-1zM75 25h1v1h-1zM0 26h1v1h-1zM2 26h1v1h-1zM74 26h1v1h-1zM76 26h1v1h-1zM1 27h1v1h-1zM75 27h1v1h-1zM0 28h1v1h-1zM2 28h1v1h-1zM74 28h1v1h-1zM76 28h1v1h-1zM1 29h1v1h-1zM75 29h1v1h-1zM0 30h1v1h-1zM2 30h1v1h-1zM74 30h1v1h-1zM76 30h1v1h-1zM1 31h1v1h-1zM75 31h1v1h-1zM0 32h1v1h-1zM2 32h1v1h-1zM74 32h1v1h-1zM76 32h1v1h-1zM1 33h1v1h-1zM75 33h1v1h-1zM0 34h1v1h-1zM2 34h1v1h-1zM74 34h1v1h-1zM76 34h1v1h-1zM1 35h1v1h-1zM75 35h1v1h-1zM0 36h1v1h-1zM2 36h1v1h-1zM74 36h1v1h-1zM76 36h1v1h-1zM1 37h1v1h-1zM75 37h1v1h-1zM0 38h1v1h-1zM2 38h1v1h-1zM74 38h1v1h-1zM76 38h1v1h-1zM1 39h1v1h-1zM75 39h1v1h-1zM0 40h1v1h-1zM2 40h1v1h-1zM74 40h1v1h-1zM76 40h1v1h-1zM1 41h1v1h-1zM75 41h1v1h-1zM0 42h1v1h-1zM2 42h1v1h-1zM74 42h1v1h-1zM76 42h1v1h-1zM1 43h1v1h-1zM75 43h1v1h-1zM0 44h1v1h-1zM2 44h1v1h-1zM74 44h1v1h-1zM76 44h1v1h-1zM1 45h1v1h-1zM75 45h1v1h-1zM0 46h1v1h-1zM2 46h1v1h-1zM74 46h1v1h-1zM76 46h1v1h-1zM1 47h1v1h-1zM75 47h1v1h-1zM0 48h1v1h-1zM2 48h1v1h-1zM74 48h1v1h-1zM76 48h1v1h-1zM1 49h1v1h-1zM75 49h1v1h-1zM0 50h1v1h-1zM2 50h1v1h-1zM74 50h1v1h-1zM76 50h1v1h-1zM1 51h1v1h-1zM75 51h1v1h-1zM0 52h1v1h-1zM2 52h1v1h-1zM74 52h1v1h-1zM76 52h1v1h-1zM1 53h1v1h-1zM75 53h1v1h-1zM0 54h1v1h-1zM2 54h1v1h-1zM74 54h1v1h-1zM76 54h1v1h-1zM1 55h1v1h-1zM75 55h1v1h-1zM0 56h1v1h-1zM2 56h1v1h-1zM74 56h1v1h-1zM76 56h1v1h-1zM1 57h1v1h-1zM75 57h1v1h-1zM0 58h1v1h-1zM2 58h1v1h-1zM74 58h1v1h-1zM76 58h1v1h-1zM1 59h1v1h-1zM75 59h1v1h-1zM0 60h1v1h-1zM2 60h1v1h-1zM74 60h1v1h-1zM76 60h1v1h-1zM1 61h1v1h-1zM75 61h1v1h-1zM0 62h1v1h-1zM2 62h1v1h-1zM74 62h1v1h-1zM76 62h1v1h-1zM1 63h1v1h-1zM75 63h1v1h-1zM0 64h1v1h-1zM2 64h1v1h-1zM74 64h1v1h-1zM76 64h1v1h-1zM1 65h1v1h-1zM75 65h1v1h-1zM0 66h1v1h-1zM2 66h1v1h-1zM74 66h1v1h-1zM76 66h1v1h-1zM1 67h1v1h-1zM75 67h1v1h-1zM0 68h1v1h-1zM2 68h1v1h-1zM74 68h1v1h-1zM76 68h1v1h-1zM1 69h1v1h-1zM75 69h1v1h-1zM0 70h1v1h-1zM2 70h1v1h-1zM74 70h1v1h-1zM76 70h1v1h-1zM1 71h1v1h-1zM75 71h1v1h-1zM0 72h1v1h-1zM2 72h1v1h-1zM74 72h1v1h-1zM76 72h1v1h-1zM1 73h1v1h-1zM75 73h1v1h-1zM0 74h1v1h-1zM2 74h1v1h-1zM74 74h1v1h-1zM76 74h1v1h-1zM1 75h1v1h-1zM75 75h1v1h-1zM0 76h1v1h-1zM2 76h1v1h-1zM74 76h1v1h-1zM76 76h1v1h-1zM1 77h1v1h-1zM75 77h1v1h-1zM0 78h1v1h-1zM2 78h1v1h-1zM74 78h1v1h-1zM76 78h1v1h-1zM1 79h1v1h-1zM75 79h1v1h-1zM0 80h1v1h-1zM2 80h1v1h-1zM74 80h1v1h-1zM76 80h1v1h-1zM1 81h1v1h-1zM75 81h1v1h-1zM0 82h1v1h-1zM2 82h1v1h-1zM74 82h1v1h-1zM76 82h1v1h-1zM1 83h1v1h-1zM75 83h1v1h-1zM0 84h1v1h-1zM2 84h1v1h-1zM74 84h1v1h-1zM76 84h1v1h-1zM1 85h1v1h-1zM75 85h1v1h-1zM0 86h1v1h-1zM2 86h1v1h-1zM74 86h1v1h-1zM76 86h1v1h-1zM1 87h1v1h-1zM75 87h1v1h-1zM0 88h1v1h-1zM2 88h1v1h-1zM74 88h1v1h-1zM76 88h1v1h-1zM1 89h1v1h-1zM75 89h1v1h-1zM0 90h1v1h-1zM2 90h1v1h-1zM74 90h1v1h-1zM76 90h1v1h-1zM1 91h1v1h-1zM75 91h1v1h-1zM0 92h1v1h-1zM2 92h1v1h-1zM74 92h1v1h-1zM76 92h1v1h-1zM1 93h1v1h-1zM75 93h1v1h-1zM0 94h1v1h-1zM2 94h1v1h-1zM74 94h1v1h-1zM76 94h1v1h-1zM1 95h1v1h-1zM75 95h1v1h-1zM0 96h1v1h-1zM2 96h1v1h-1zM74 96h1v1h-1zM76 96h1v1h-1zM1 97h1v1h-1zM75 97h1v1h-1zM0 98h1v1h-1zM2 98h1v1h-1zM74 98h1v1h-1zM76 98h1v1h-1zM1 99h1v1h-1zM75 99h1v1h-1zM0 100h1v1h-1zM2 100h1v1h-1zM74 100h1v1h-1zM76 100h1v1h-1zM1 101h1v1h-1zM75 101h1v1h-1zM0 102h1v1h-1zM2 102h1v1h-1zM74 102h1v1h-1zM76 102h1v1h-1zM1 103h1v1h-1zM75 103h1v1h-1zM0 104h1v1h-1zM2 104h1v1h-1zM74 104h1v1h-1zM76 104h1v1h-1zM1 105h1v1h-1zM75 105h1v1h-1zM0 106h1v1h-1zM2 106h1v1h-1zM74 106h1v1h-1zM76 106h1v1h-1zM1 107h1v1h-1zM75 107h1v1h-1zM0 108h1v1h-1zM2 108h1v1h-1zM74 108h1v1h-1zM76 108h1v1h-1zM1 109h1v1h-1zM75 109h1v1h-1zM0 110h1v1h-1zM2 110h1v1h-1zM74 110h1v1h-1zM76 110h1v1h-1zM1 111h1v1h-1zM75 111h1v1h-1zM0 112h1v1h-1zM2 112h1v1h-1zM74 112h1v1h-1zM76 112h1v1h-1zM1 113h1v1h-1zM75 113h1v1h-1zM0 114h1v1h-1zM2 114h1v1h-1zM74 114h1v1h-1zM76 114h1v1h-1zM1 115h1v1h-1zM75 115h1v1h-1zM0 116h1v1h-1zM2 116h1v1h-1zM74 116h1v1h-1zM76 116h1v1h-1zM1 117h1v1h-1zM75 117h1v1h-1zM0 118h1v1h-1zM2 118h1v1h-1zM74 118h1v1h-1zM76 118h1v1h-1zM1 119h1v1h-1zM75 119h1v1h-1zM0 120h1v1h-1zM2 120h1v1h-1zM74 120h1v1h-1zM76 120h1v1h-1zM1 121h1v1h-1zM75 121h1v1h-1zM0 122h1v1h-1zM2 122h1v1h-1zM74 122h1v1h-1zM76 122h1v1h-1zM1 123h1v1h-1zM75 123h1v1h-1zM0 124h1v1h-1zM2 124h1v1h-1zM4 124h1v1h-1zM6 124h1v1h-1zM8 124h1v1h-1zM10 124h1v1h-1zM12 124h1v1h-1zM14 124h1v1h-1zM16 124h1v1h-1zM18 124h1v1h-1zM20 124h1v1h-1zM22 124h1v1h-1zM24 124h1v1h-1zM26 124h1v1h-1zM28 124h1v1h-1zM30 124h1v1h-1zM32 124h1v1h-1zM34 124h1v1h-1zM36 124h1v1h-1zM38 124h1v1h-1zM40 124h1v1h-1zM42 124h1v1h-1zM44 124h1v1h-1zM46 124h1v1h-1zM48 124h1v1h-1zM50 124h1v1h-1zM52 124h1v1h-1zM54 124h1v1h-1zM56 124h1v1h-1zM58 124h1v1h-1zM60 124h1v1h-1zM62 124h1v1h-1zM64 124h1v1h-1zM66 124h1v1h-1zM68 124h1v1h-1zM70 124h1v1h-1zM72 124h1v1h-1zM74 124h1v1h-1zM76 124h1v1h-1zM1 125h1v1h-1zM3 125h1v1h-1zM5 125h1v1h-1zM7 125h1v1h-1zM9 125h1v1h-1zM11 125h1v1h-1zM13 125h1v1h-1zM15 125h1v1h-1zM17 125h1v1h-1zM19 125h1v1h-1zM21 125h1v1h-1zM23 125h1v1h-1zM25 125h1v1h-1zM27 125h1v1h-1zM29 125h1v1h-1zM31 125h1v1h-1zM33 125h1v1h-1zM35 125h1v1h-1zM37 125h1v1h-1zM39 125h1v1h-1zM41 125h1v1h-1zM43 125h1v1h-1zM45 125h1v1h-1zM47 125h1v1h-1zM49 125h1v1h-1zM51 125h1v1h-1zM53 125h1v1h-1zM55 125h1v1h-1zM57 125h1v1h-1zM59 125h1v1h-1zM61 125h1v1h-1zM63 125h1v1h-1zM65 125h1v1h-1zM67 125h1v1h-1zM69 125h1v1h-1zM71 125h1v1h-1zM73 125h1v1h-1zM75 125h1v1h-1zM0 126h1v1h-1zM2 126h1v1h-1zM4 126h1v1h-1zM6 126h1v1h-1zM8 126h1v1h-1zM10 126h1v1h-1zM12 126h1v1h-1zM14 126h1v1h-1zM16 126h1v1h-1zM18 126h1v1h-1zM20 126h1v1h-1zM22 126h1v1h-1zM24 126h1v1h-1zM26 126h1v1h-1zM28 126h1v1h-1zM30 126h1v1h-1zM32 126h1v1h-1zM34 126h1v1h-1zM36 126h1v1h-1zM38 126h1v1h-1zM40 126h1v1h-1zM42 126h1v1h-1zM44 126h1v1h-1zM46 126h1v1h-1zM48 126h1v1h-1zM50 126h1v1h-1zM52 126h1v1h-1zM54 126h1v1h-1zM56 126h1v1h-1zM58 126h1v1h-1zM60 126h1v1h-1zM62 126h1v1h-1zM64 126h1v1h-1zM66 126h1v1h-1zM68 126h1v1h-1zM70 126h1v1h-1zM72 126h1v1h-1zM74 126h1v1h-1zM76 126h1v1h-1z" fill="#111"/></svg><div class="a" style="left:1px;top:271px;width:77px;height:1px;background:#8c8c8c;"></div><svg style="left:78px;top:272px" width="707" height="1"><line x1="0" y1="0.5" x2="707" y2="0.5" stroke="#000" stroke-dasharray="1 1"/></svg><div class="a" style="left:0px;top:272px;width:78px;height:1px;background:#fff;"></div><svg style="left:78px;top:400px" width="707" height="1"><line x1="0" y1="0.5" x2="707" y2="0.5" stroke="#000" stroke-dasharray="1 1"/></svg><div class="a" style="left:0px;top:400px;width:78px;height:1px;background:#fff;"></div><div class="t" style="left:7px;top:9px;font-size:13px">1</div><div class="t" style="left:7px;top:281px;font-size:13px">2</div><div class="t" style="left:7px;top:410px;font-size:13px">3</div><div class="a" style="left:96px;top:0px;width:1px;height:415px;background:#ffc994;"></div><div class="a" style="left:97px;top:0px;width:1px;height:415px;background:#8c8c8c;"></div><div class="a" style="left:97px;top:32px;width:51px;height:1px;background:#ffc994;"></div><div class="a" style="left:97px;top:33px;width:51px;height:1px;background:#8c8c8c;"></div><div class="a" style="left:149px;top:24px;width:3px;height:17px;background:#ffc994;"></div><div class="a" style="left:152px;top:24px;width:1px;height:17px;background:#8c8c8c;"></div><div class="a" style="left:156px;top:29px;width:7px;height:9px;background:#000;"></div><div class="a" style="left:157px;top:30px;width:5px;height:7px;background:#bfe3ff;"></div><div class="a" style="left:158px;top:31px;width:3px;height:5px;background:#fff;"></div><div class="a" style="left:169px;top:24px;width:3px;height:17px;background:#ffc994;"></div><div class="a" style="left:172px;top:24px;width:1px;height:17px;background:#8c8c8c;"></div><div class="a" style="left:173px;top:32px;width:140px;height:1px;background:#ffc994;"></div><div class="a" style="left:173px;top:33px;width:140px;height:1px;background:#8c8c8c;"></div><div class="t" style="left:138px;top:5px;font-size:10px;line-height:11px;letter-spacing:-0.2px">sys_bTrue</div><div class="t" style="left:151px;top:14px;font-size:8px;line-height:9px;color:#1a7a1a">常闭</div><div class="a" style="left:208px;top:32px;width:1px;height:193px;background:#ffc994;"></div><div class="a" style="left:209px;top:32px;width:1px;height:193px;background:#8c8c8c;"></div><div class="a" style="left:313px;top:9px;width:80px;height:48px;background:#ffc994;"></div><div class="a" style="left:392px;top:9px;width:1px;height:48px;background:#8c8c8c;"></div><div class="a" style="left:313px;top:56px;width:80px;height:1px;background:#8c8c8c;"></div><div class="t" style="left:253px;width:200px;text-align:center;top:10px;font-size:13.5px;letter-spacing:-0.589px">MOVE</div><div class="t" style="left:316px;top:26px;font-size:13.5px;letter-spacing:-0.766px">EN</div><div class="t" style="right:395px;top:26px;font-size:13.5px;letter-spacing:-0.133px">ENO</div><div class="a" style="left:288px;top:48px;width:25px;height:1px;background:#ffc994;"></div><div class="a" style="left:288px;top:49px;width:25px;height:1px;background:#8c8c8c;"></div><div class="t" style="right:500px;top:43px;font-size:13.5px;letter-spacing:-0.927px">16#0301</div><div class="a" style="left:393px;top:32px;width:9px;height:1px;background:#ffc994;"></div><div class="a" style="left:393px;top:33px;width:9px;height:1px;background:#8c8c8c;"></div><div class="a" style="left:393px;top:48px;width:25px;height:1px;background:#ffc994;"></div><div class="a" style="left:393px;top:49px;width:25px;height:1px;background:#8c8c8c;"></div><div class="t" style="left:420px;top:43px;font-size:13.5px;letter-spacing:-0.2px">DataBuf[0]</div><div class="a" style="left:208px;top:96px;width:105px;height:1px;background:#ffc994;"></div><div class="a" style="left:208px;top:97px;width:105px;height:1px;background:#8c8c8c;"></div><div class="a" style="left:313px;top:73px;width:80px;height:48px;background:#ffc994;"></div><div class="a" style="left:392px;top:73px;width:1px;height:48px;background:#8c8c8c;"></div><div class="a" style="left:313px;top:120px;width:80px;height:1px;background:#8c8c8c;"></div><div class="t" style="left:253px;width:200px;text-align:center;top:74px;font-size:13.5px;letter-spacing:-0.589px">MOVE</div><div class="t" style="left:316px;top:90px;font-size:13.5px;letter-spacing:-0.766px">EN</div><div class="t" style="right:395px;top:90px;font-size:13.5px;letter-spacing:-0.133px">ENO</div><div class="a" style="left:288px;top:112px;width:25px;height:1px;background:#ffc994;"></div><div class="a" style="left:288px;top:113px;width:25px;height:1px;background:#8c8c8c;"></div><div class="t" style="right:500px;top:107px;font-size:13.5px;letter-spacing:-0.927px">16#0000</div><div class="a" style="left:393px;top:96px;width:9px;height:1px;background:#ffc994;"></div><div class="a" style="left:393px;top:97px;width:9px;height:1px;background:#8c8c8c;"></div><div class="a" style="left:393px;top:112px;width:25px;height:1px;background:#ffc994;"></div><div class="a" style="left:393px;top:113px;width:25px;height:1px;background:#8c8c8c;"></div><div class="t" style="left:420px;top:107px;font-size:13.5px;letter-spacing:-0.2px">DataBuf[1]</div><div class="a" style="left:208px;top:160px;width:105px;height:1px;background:#ffc994;"></div><div class="a" style="left:208px;top:161px;width:105px;height:1px;background:#8c8c8c;"></div><div class="a" style="left:313px;top:137px;width:80px;height:48px;background:#ffc994;"></div><div class="a" style="left:392px;top:137px;width:1px;height:48px;background:#8c8c8c;"></div><div class="a" style="left:313px;top:184px;width:80px;height:1px;background:#8c8c8c;"></div><div class="t" style="left:253px;width:200px;text-align:center;top:138px;font-size:13.5px;letter-spacing:-0.589px">MOVE</div><div class="t" style="left:316px;top:154px;font-size:13.5px;letter-spacing:-0.766px">EN</div><div class="t" style="right:395px;top:154px;font-size:13.5px;letter-spacing:-0.133px">ENO</div><div class="a" style="left:288px;top:176px;width:25px;height:1px;background:#ffc994;"></div><div class="a" style="left:288px;top:177px;width:25px;height:1px;background:#8c8c8c;"></div><div class="t" style="right:500px;top:171px;font-size:13.5px;letter-spacing:-0.927px">16#0800</div><div class="a" style="left:393px;top:160px;width:9px;height:1px;background:#ffc994;"></div><div class="a" style="left:393px;top:161px;width:9px;height:1px;background:#8c8c8c;"></div><div class="a" style="left:393px;top:176px;width:25px;height:1px;background:#ffc994;"></div><div class="a" style="left:393px;top:177px;width:25px;height:1px;background:#8c8c8c;"></div><div class="t" style="left:420px;top:171px;font-size:13.5px;letter-spacing:-0.2px">DataBuf[2]</div><div class="a" style="left:208px;top:224px;width:105px;height:1px;background:#ffc994;"></div><div class="a" style="left:208px;top:225px;width:105px;height:1px;background:#8c8c8c;"></div><div class="a" style="left:313px;top:201px;width:80px;height:48px;background:#ffc994;"></div><div class="a" style="left:392px;top:201px;width:1px;height:48px;background:#8c8c8c;"></div><div class="a" style="left:313px;top:248px;width:80px;height:1px;background:#8c8c8c;"></div><div class="t" style="left:253px;width:200px;text-align:center;top:202px;font-size:13.5px;letter-spacing:-0.589px">MOVE</div><div class="t" style="left:316px;top:218px;font-size:13.5px;letter-spacing:-0.766px">EN</div><div class="t" style="right:395px;top:218px;font-size:13.5px;letter-spacing:-0.133px">ENO</div><div class="a" style="left:288px;top:240px;width:25px;height:1px;background:#ffc994;"></div><div class="a" style="left:288px;top:241px;width:25px;height:1px;background:#8c8c8c;"></div><div class="t" style="right:500px;top:235px;font-size:13.5px;letter-spacing:-0.516px">6</div><div class="a" style="left:393px;top:224px;width:9px;height:1px;background:#ffc994;"></div><div class="a" style="left:393px;top:225px;width:9px;height:1px;background:#8c8c8c;"></div><div class="a" style="left:393px;top:240px;width:25px;height:1px;background:#ffc994;"></div><div class="a" style="left:393px;top:241px;width:25px;height:1px;background:#8c8c8c;"></div><div class="t" style="left:420px;top:235px;font-size:13.5px;letter-spacing:-0.318px">DataCount</div><div class="a" style="left:97px;top:320px;width:36px;height:1px;background:#ffc994;"></div><div class="a" style="left:97px;top:321px;width:36px;height:1px;background:#8c8c8c;"></div><div class="a" style="left:133px;top:312px;width:3px;height:17px;background:#ffc994;"></div><div class="a" style="left:136px;top:312px;width:1px;height:17px;background:#8c8c8c;"></div><div class="a" style="left:140px;top:317px;width:7px;height:9px;background:#000;"></div><div class="a" style="left:141px;top:318px;width:5px;height:7px;background:#bfe3ff;"></div><div class="a" style="left:142px;top:319px;width:3px;height:5px;background:#fff;"></div><div class="a" style="left:153px;top:312px;width:3px;height:17px;background:#ffc994;"></div><div class="a" style="left:156px;top:312px;width:1px;height:17px;background:#8c8c8c;"></div><div class="a" style="left:157px;top:320px;width:156px;height:1px;background:#ffc994;"></div><div class="a" style="left:157px;top:321px;width:156px;height:1px;background:#8c8c8c;"></div><div class="t" style="left:122px;top:293px;font-size:10px;line-height:11px;letter-spacing:-0.2px">sys_bTrue</div><div class="t" style="left:135px;top:302px;font-size:8px;line-height:9px;color:#1a7a1a">常闭</div><div class="a" style="left:313px;top:297px;width:144px;height:64px;background:#ffc994;"></div><div class="a" style="left:456px;top:297px;width:1px;height:64px;background:#8c8c8c;"></div><div class="a" style="left:313px;top:360px;width:144px;height:1px;background:#8c8c8c;"></div><div class="t" style="left:285px;width:200px;text-align:center;top:282px;font-size:13.5px;letter-spacing:-0.816px">CRC16</div><div class="t" style="left:285px;width:200px;text-align:center;top:298px;font-size:13.5px;letter-spacing:-0.771px">FPXH_CRC16_Check</div><div class="t" style="left:316px;top:314px;font-size:13.5px;letter-spacing:-0.766px">EN</div><div class="t" style="right:332px;top:314px;font-size:13.5px;letter-spacing:-0.133px">ENO</div><div class="t" style="left:316px;top:330px;font-size:13.5px;letter-spacing:-0.076px">xDataBuf</div><div class="t" style="right:332px;top:330px;font-size:13.5px;letter-spacing:-0.074px">yCRCData</div><div class="t" style="left:316px;top:346px;font-size:13.5px;letter-spacing:-0.366px">xDataCount</div><div class="a" style="left:288px;top:336px;width:25px;height:1px;background:#ffc994;"></div><div class="a" style="left:288px;top:337px;width:25px;height:1px;background:#8c8c8c;"></div><div class="a" style="left:288px;top:352px;width:25px;height:1px;background:#ffc994;"></div><div class="a" style="left:288px;top:353px;width:25px;height:1px;background:#8c8c8c;"></div><div class="t" style="right:500px;top:331px;font-size:13.5px;letter-spacing:-0.464px">DataBuf</div><div class="t" style="right:500px;top:347px;font-size:13.5px;letter-spacing:-0.443px">DataCount</div><div class="a" style="left:457px;top:320px;width:9px;height:1px;background:#ffc994;"></div><div class="a" style="left:457px;top:321px;width:9px;height:1px;background:#8c8c8c;"></div><div class="a" style="left:457px;top:336px;width:26px;height:1px;background:#ffc994;"></div><div class="a" style="left:457px;top:337px;width:26px;height:1px;background:#8c8c8c;"></div><div class="t" style="left:484px;top:331px;font-size:13.5px;letter-spacing:-0.961px">CRCData</div><div class="a" style="left:207px;top:31px;width:3px;height:3px;background:#000;"></div><div class="a" style="left:207px;top:95px;width:3px;height:3px;background:#000;"></div><div class="a" style="left:207px;top:159px;width:3px;height:3px;background:#000;"></div><div class="a" style="left:95px;top:319px;width:3px;height:3px;background:#000;"></div><div class="a" style="left:95px;top:31px;width:3px;height:3px;background:#000;"></div><div class="t" style="left:122px;top:405px;font-size:10px;line-height:11px;letter-spacing:-0.2px">sys_bTrue</div><div class="t" style="left:135px;top:414px;font-size:8px;line-height:9px;color:#1a7a1a">常闭</div><div class="a" style="left:313px;top:409px;width:80px;height:55px;background:#ffc994;"></div><div class="a" style="left:392px;top:409px;width:1px;height:55px;background:#8c8c8c;"></div><div class="a" style="left:313px;top:463px;width:80px;height:1px;background:#8c8c8c;"></div><div class="t" style="left:253px;width:200px;text-align:center;top:410px;font-size:13.5px;letter-spacing:-0.589px">MOVE</div></div><div class="a" style="left:1085px;top:236px;width:17px;height:415px;background:#e8e8ec"></div><div class="a" style="left:1085px;top:236px;width:17px;height:16px;background:#ccd3e2"></div><svg style="left:1087px;top:237px" width="16" height="16" viewBox="0 0 16 16"><path d="M1 7h13M1 10h13" stroke="#222" stroke-width="1.2"/><path d="M7.5 1l-3 3h6zM7.5 16l-3-3h6z" fill="#222"/><path d="M7.5 3v3M7.5 11v3" stroke="#222"/></svg><svg style="left:1089px;top:257px" width="9" height="7" viewBox="0 0 9 7"><path d="M0.5 6h8L4.5 1z" fill="#888ea0"/></svg><div class="a" style="left:1090px;top:266px;width:7px;height:274px;background:#cdcfd6"></div><svg style="left:1089px;top:639px" width="9" height="7" viewBox="0 0 9 7"><path d="M0.5 1h8L4.5 6z" fill="#888ea0"/></svg><div class="a" style="left:300px;top:651px;width:802px;height:17px;background:#e8e8ec"></div><div class="a" style="left:317px;top:656px;width:71px;height:7px;background:#cdcfd6"></div><svg style="left:305px;top:654px" width="7" height="12" viewBox="0 0 7 12"><path d="M6 0.5v11L0.5 6z" fill="#888ea0"/></svg><svg style="left:1075px;top:654px" width="7" height="12" viewBox="0 0 7 12"><path d="M0.5 0.5v11L6 6z" fill="#888ea0"/></svg><div class="a" style="left:1108px;top:85px;width:247px;height:22px;background:#4d6082;border:1px solid #7d8db3;border-bottom:none"></div><div class="t" style="left:1113px;top:89px;color:#fff">进入数据监控1</div><svg style="left:1306px;top:90px" width="10" height="12" viewBox="0 0 10 12"><path d="M0.5 4.5h7l-3.5 3.5z" fill="#fff"/></svg><svg style="left:1322px;top:90px" width="10" height="14" viewBox="0 0 10 14"><path d="M1.5 0.5h5v7h-5z M0 7.5h8 M4 8v5" stroke="#fff" stroke-width="1.3" fill="none"/><rect x="2" y="1" width="2" height="6" fill="#fff"/></svg><svg style="left:1337px;top:92px" width="10" height="10" viewBox="0 0 10 10"><path d="M0.5 0.5l8 8M8.5 0.5l-8 8" stroke="#fff" stroke-width="1.2"/></svg><div class="a" style="left:1108px;top:107px;width:247px;height:562px;background:#cfd6e5;border:1px solid #7d8db3;border-top:none"></div><svg style="left:1113px;top:112px" width="16" height="16" viewBox="0 0 16 16"><rect x="0.5" y="0.5" width="3" height="3" fill="#d5dfcb" stroke="#2d2d2d"/><rect x="0.5" y="11.5" width="3" height="3" fill="#2d2d2d" stroke="#2d2d2d"/><rect x="12.5" y="5.5" width="3" height="3" fill="#d5dfcb" stroke="#2d2d2d"/><path d="M4 7l3.5-3.5v2.3h4v2.4h-4v2.3z" fill="#0e4f9a"/></svg><svg style="left:1135px;top:112px" width="16" height="16" viewBox="0 0 16 16"><rect x="0.5" y="0.5" width="3" height="3" fill="#2d2d2d" stroke="#2d2d2d"/><rect x="0.5" y="11.5" width="3" height="3" fill="#d5dfcb" stroke="#2d2d2d"/><rect x="12.5" y="5.5" width="3" height="3" fill="#d5dfcb" stroke="#2d2d2d"/><path d="M4 7l3.5-3.5v2.3h4v2.4h-4v2.3z" fill="#0e4f9a"/></svg><svg style="left:1158px;top:112px" width="16" height="16" viewBox="0 0 16 16"><path d="M2 2l11 11M13 2L2 13" stroke="#fff" stroke-width="3.6"/><path d="M2 2l11 11M13 2L2 13" stroke="#7a7a7a" stroke-width="2.2"/></svg><div class="a" style="left:1180px;top:111px;width:1px;height:18px;background:#8d97ab"></div><svg style="left:1186px;top:112px" width="16" height="16" viewBox="0 0 16 16"><rect x="9" y="1" width="6" height="6" fill="#f5a623"/><path d="M5 4v6h5" stroke="#1c87d1" stroke-width="2" fill="none"/><path d="M1 8v6h5" stroke="#7a7a7a" stroke-width="2" fill="none"/></svg><div class="a" style="left:1207px;top:111px;width:1px;height:18px;background:#8d97ab"></div><svg style="left:0;top:0" width="1360" height="200"><path d="M1216 116h1v1h-1zM1216 117h1v1h-1zM1215 118h1v1h-1zM1217 118h1v1h-1zM1215 119h1v1h-1zM1217 119h1v1h-1zM1215 120h3v1h-3zM1215 121h1v1h-1zM1217 121h1v1h-1zM1215 122h1v1h-1zM1217 122h1v1h-1zM1220 116h2v1h-2zM1220 117h2v1h-2zM1219 118h1v1h-1zM1220 119h1v1h-1zM1221 120h1v1h-1zM1221 121h1v1h-1zM1219 122h2v1h-2zM1224 116h2v1h-2zM1224 117h2v1h-2zM1223 118h1v1h-1zM1223 119h1v1h-1zM1223 120h1v1h-1zM1223 121h1v1h-1zM1224 122h2v1h-2z" fill="#111" shape-rendering="crispEdges"/><path d="M1227 116h1v1h-1zM1227 117h1v1h-1zM1227 118h1v1h-1zM1227 119h1v1h-1zM1227 120h1v1h-1zM1227 121h1v1h-1zM1227 122h1v1h-1zM1229 116h1v1h-1zM1229 117h1v1h-1zM1229 118h1v1h-1zM1229 119h1v1h-1zM1229 120h1v1h-1zM1229 121h1v1h-1zM1229 122h1v1h-1z" fill="#111" shape-rendering="crispEdges"/><path d="M1237 116h3v1h-3zM1237 117h3v1h-3zM1237 118h2v1h-2zM1240 118h1v1h-1zM1237 119h2v1h-2zM1240 119h1v1h-1zM1237 120h2v1h-2zM1240 120h1v1h-1zM1237 121h2v1h-2zM1240 121h1v1h-1zM1237 122h3v1h-3zM1243 116h4v1h-4zM1243 117h4v1h-4zM1243 118h2v1h-2zM1243 119h3v1h-3zM1243 120h2v1h-2zM1243 121h2v1h-2zM1243 122h4v1h-4zM1250 116h3v1h-3zM1250 117h3v1h-3zM1249 118h2v1h-2zM1249 119h2v1h-2zM1249 120h2v1h-2zM1249 121h2v1h-2zM1250 122h3v1h-3z" fill="#111" shape-rendering="crispEdges"/><path d="M1259 116h3v1h-3zM1259 117h3v1h-3zM1259 118h2v1h-2zM1262 118h1v1h-1zM1259 119h3v1h-3zM1259 120h2v1h-2zM1262 120h1v1h-1zM1259 121h2v1h-2zM1262 121h1v1h-1zM1259 122h3v1h-3zM1265 116h2v1h-2zM1265 117h2v1h-2zM1265 118h2v1h-2zM1265 119h2v1h-2zM1265 120h2v1h-2zM1265 121h2v1h-2zM1265 122h2v1h-2zM1269 116h1v1h-1zM1272 116h1v1h-1zM1269 117h1v1h-1zM1272 117h1v1h-1zM1269 118h2v1h-2zM1272 118h1v1h-1zM1269 119h4v1h-4zM1269 120h2v1h-2zM1272 120h1v1h-1zM1269 121h2v1h-2zM1272 121h1v1h-1zM1269 122h2v1h-2zM1272 122h1v1h-1z" fill="#111" shape-rendering="crispEdges"/><path d="M1281 116h2v1h-2zM1284 116h1v1h-1zM1281 117h2v1h-2zM1284 117h1v1h-1zM1281 118h2v1h-2zM1284 118h1v1h-1zM1281 119h4v1h-4zM1281 120h2v1h-2zM1284 120h1v1h-1zM1281 121h2v1h-2zM1284 121h1v1h-1zM1281 122h2v1h-2zM1284 122h1v1h-1zM1287 116h4v1h-4zM1287 117h4v1h-4zM1287 118h2v1h-2zM1287 119h3v1h-3zM1287 120h2v1h-2zM1287 121h2v1h-2zM1287 122h4v1h-4zM1293 116h2v1h-2zM1296 116h1v1h-1zM1293 117h2v1h-2zM1296 117h1v1h-1zM1293 118h2v1h-2zM1296 118h1v1h-1zM1294 119h2v1h-2zM1294 120h2v1h-2zM1293 121h2v1h-2zM1296 121h1v1h-1zM1293 122h2v1h-2zM1296 122h1v1h-1z" fill="#111" shape-rendering="crispEdges"/><path d="M1302 116h3v1h-3zM1302 117h3v1h-3zM1302 118h2v1h-2zM1305 118h1v1h-1zM1302 119h2v1h-2zM1305 119h1v1h-1zM1302 120h2v1h-2zM1305 120h1v1h-1zM1302 121h2v1h-2zM1305 121h1v1h-1zM1302 122h3v1h-3zM1308 116h4v1h-4zM1308 117h4v1h-4zM1308 118h2v1h-2zM1308 119h3v1h-3zM1308 120h2v1h-2zM1308 121h2v1h-2zM1308 122h2v1h-2zM1314 116h4v1h-4zM1314 117h4v1h-4zM1315 118h2v1h-2zM1315 119h2v1h-2zM1315 120h2v1h-2zM1315 121h2v1h-2zM1315 122h2v1h-2z" fill="#111" shape-rendering="crispEdges"/></svg><div class="a" style="left:1111px;top:133px;width:241px;height:1px;background:#8e9ab2"></div><svg style="left:1114px;top:140px" width="16" height="16" viewBox="0 0 16 16"><path d="M1 15l2-5 8-8 3 3-8 8z" fill="#333"/><path d="M9 4l3 3" stroke="#888" stroke-width="0.8"/><path d="M3 10l3 3" stroke="#666" stroke-width="0.8"/></svg><svg style="left:1136px;top:140px" width="16" height="16" viewBox="0 0 16 16"><circle cx="8" cy="8" r="5" fill="#333"/><path d="M8 1v14M1 8h14M3 3l10 10M13 3L3 13" stroke="#333" stroke-width="2.6"/><circle cx="8" cy="8" r="2" fill="#cfd6e5"/></svg><div class="a" style="left:1109px;top:161px;width:245px;height:25px;background:#fff;border-top:1px solid #aab3c5"></div><div class="t" style="left:1112px;top:166px;font-size:12px;color:#a0a0a0;letter-spacing:0.121px;">过滤: (Ctrl+F)</div><svg style="left:1342px;top:172px" width="8" height="5" viewBox="0 0 8 5"><path d="M0.5 0.5h6l-3 3z" fill="#333"/></svg><div class="a" style="left:1109px;top:186px;width:245px;height:25px;background:#4d6082"></div><div class="a" style="left:1133px;top:189px;width:1px;height:19px;background:#2d3d5a"></div><div class="a" style="left:1283px;top:189px;width:1px;height:19px;background:#2d3d5a"></div><div class="t" style="left:1193px;top:191px;font-size:12px;color:#fff;letter-spacing:0.5px;">标识符</div><div class="t" style="left:1308px;top:191px;font-size:12px;color:#fff;letter-spacing:1.0px;">数值</div><div class="a" style="left:1109px;top:211px;width:245px;height:442px;background:#fff;overflow:hidden"><div class="a" style="left:0;top:0px;width:245px;height:21px;background:#fff"></div><div class="a" style="left:25px;top:21px;width:220px;height:1px;background:#e8e8e8"></div><div class="a" style="left:174px;top:0px;width:1px;height:21px;background:#e4e4e4"></div><div class="t" style="left:14px;top:3px;color:#2a8ab8">1</div><div class="t" style="left:47px;top:3px;font-size:12px;color:#000;letter-spacing:0.33px;">MyPOU.DataBuf[0]</div><div class="t" style="left:193px;top:3px;font-size:12px;color:#000;letter-spacing:0.38px;">16#0301</div><div class="a" style="left:0;top:22px;width:245px;height:21px;background:#f0f0f0"></div><div class="a" style="left:25px;top:43px;width:220px;height:1px;background:#e8e8e8"></div><div class="a" style="left:174px;top:22px;width:1px;height:21px;background:#e4e4e4"></div><div class="t" style="left:14px;top:25px;color:#2a8ab8">2</div><div class="t" style="left:47px;top:25px;font-size:12px;color:#000;letter-spacing:0.33px;">MyPOU.DataBuf[1]</div><div class="t" style="left:193px;top:25px;font-size:12px;color:#000;letter-spacing:0.38px;">16#0000</div><div class="a" style="left:0;top:44px;width:245px;height:21px;background:#fff"></div><div class="a" style="left:25px;top:65px;width:220px;height:1px;background:#e8e8e8"></div><div class="a" style="left:174px;top:44px;width:1px;height:21px;background:#e4e4e4"></div><div class="t" style="left:14px;top:47px;color:#2a8ab8">3</div><div class="t" style="left:47px;top:47px;font-size:12px;color:#000;letter-spacing:0.33px;">MyPOU.DataBuf[2]</div><div class="t" style="left:193px;top:47px;font-size:12px;color:#000;letter-spacing:0.38px;">16#0800</div><div class="a" style="left:0;top:66px;width:245px;height:21px;background:#f0f0f0"></div><div class="a" style="left:25px;top:87px;width:220px;height:1px;background:#e8e8e8"></div><div class="a" style="left:174px;top:66px;width:1px;height:21px;background:#e4e4e4"></div><div class="t" style="left:14px;top:69px;color:#2a8ab8">4</div><div class="t" style="left:47px;top:69px;font-size:12px;color:#000;letter-spacing:0.33px;">MyPOU.DataBuf[3]</div><div class="t" style="left:193px;top:69px;font-size:12px;color:#000;letter-spacing:0.047px;">16#0C44</div><div class="a" style="left:0;top:88px;width:245px;height:21px;background:#fff"></div><div class="a" style="left:25px;top:109px;width:220px;height:1px;background:#e8e8e8"></div><div class="a" style="left:174px;top:88px;width:1px;height:21px;background:#e4e4e4"></div><div class="t" style="left:14px;top:91px;color:#2a8ab8">5</div><svg style="left:0;top:0" width="245" height="22"><path d="M0 0.5H245M0 20.5H245" stroke="#000" stroke-dasharray="1 1"/></svg></div><div class="a" style="left:1109px;top:653px;width:245px;height:15px;background:#f0f0f0"></div><div class="a" style="left:1126px;top:653px;width:98px;height:15px;background:#cdcdcd"></div><svg style="left:1113px;top:655px" width="10" height="12" viewBox="0 0 10 12"><path d="M6 1L2 5.5 6 10" stroke="#555" stroke-width="1.6" fill="none"/></svg><svg style="left:1340px;top:655px" width="10" height="12" viewBox="0 0 10 12"><path d="M2 1l4 4.5L2 10" stroke="#555" stroke-width="1.6" fill="none"/></svg><div class="t" style="left:13px;top:680px;color:#fff;letter-spacing:0.4px">编译/检查</div><div class="t" style="left:84px;top:680px;color:#fff;letter-spacing:0.4px">查找结果1</div><div class="t" style="left:157px;top:680px;color:#fff;letter-spacing:0.4px">查找结果3</div><div class="a" style="left:6px;top:698px;width:217px;height:6px;background:#44587a"></div><div class="a" style="left:0;top:704px;width:1360px;height:22px;background:#404e8b"></div><div class="t" style="left:4px;top:708px;color:#fff;letter-spacing:0.3px">就绪</div><div class="t" style="left:350px;top:708px;color:#fff;letter-spacing:0.3px">本体</div><div class="t" style="left:771px;top:708px;color:#fff;letter-spacing:0.226px">以太网: , 192.168.1.164, 32769</div><div class="t" style="left:973px;top:708px;color:#fff;letter-spacing:0.216px">没有指定MEWNET/C-NET网络</div><div class="a" style="left:1178px;top:714px;width:6px;height:2px;background:#fff"></div><div class="a" style="left:1187px;top:714px;width:98px;height:1px;background:#fff"></div><div class="a" style="left:1236px;top:709px;width:3px;height:11px;background:#fff"></div><div class="a" style="left:1289px;top:714px;width:9px;height:2px;background:#fff"></div><div class="a" style="left:1292.5px;top:710px;width:2px;height:10px;background:#fff"></div><div class="t" style="left:1305px;top:708px;color:#fff;letter-spacing:0.432px">100%</div><svg style="left:1345px;top:712px" width="10" height="10"><rect x="8" y="0" width="1" height="1" fill="#b8bcd8"/><rect x="6" y="2" width="1" height="1" fill="#b8bcd8"/><rect x="8" y="2" width="1" height="1" fill="#b8bcd8"/><rect x="4" y="4" width="1" height="1" fill="#b8bcd8"/><rect x="6" y="4" width="1" height="1" fill="#b8bcd8"/><rect x="8" y="4" width="1" height="1" fill="#b8bcd8"/><rect x="2" y="6" width="1" height="1" fill="#b8bcd8"/><rect x="4" y="6" width="1" height="1" fill="#b8bcd8"/><rect x="6" y="6" width="1" height="1" fill="#b8bcd8"/><rect x="8" y="6" width="1" height="1" fill="#b8bcd8"/><rect x="0" y="8" width="1" height="1" fill="#b8bcd8"/><rect x="2" y="8" width="1" height="1" fill="#b8bcd8"/><rect x="4" y="8" width="1" height="1" fill="#b8bcd8"/><rect x="6" y="8" width="1" height="1" fill="#b8bcd8"/><rect x="8" y="8" width="1" height="1" fill="#b8bcd8"/></svg><div class="a" style="left:0;top:0;width:1360px;height:726px;border:1px solid #3f4c8c;pointer-events:none"></div></body></html>
